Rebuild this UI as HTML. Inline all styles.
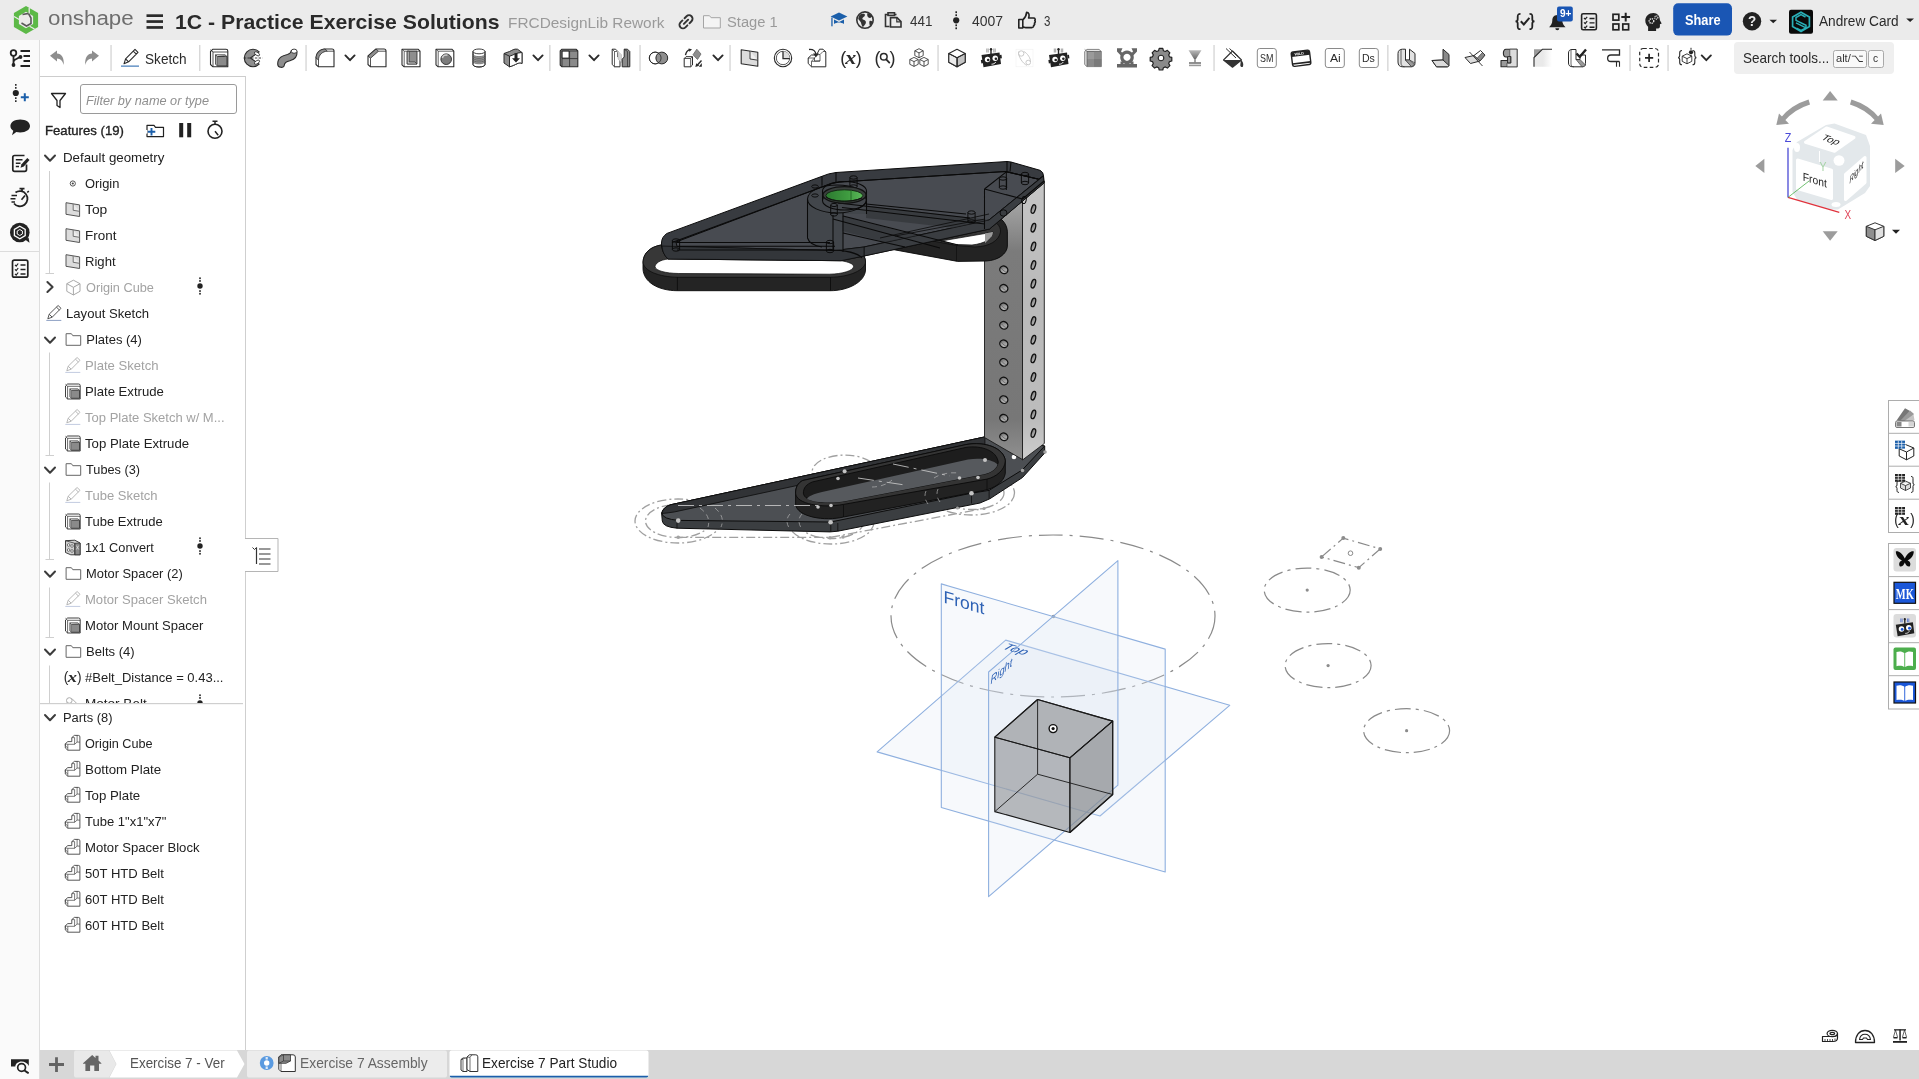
<!DOCTYPE html>
<html lang="en">
<head>
<meta charset="utf-8">
<title>1C - Practice Exercise Solutions</title>
<style>
*{box-sizing:border-box;margin:0;padding:0}
html,body{width:1919px;height:1079px;overflow:hidden;background:#fff;font-family:"Liberation Sans",sans-serif;color:#222}
.abs{position:absolute}
#topbar{position:absolute;left:0;top:0;width:1919px;height:40px;background:#ebebeb}
#leftbar{position:absolute;left:0;top:40px;width:40px;height:1039px;background:#fafafa}
#toolbar{position:absolute;left:40px;top:40px;width:1879px;height:36px;background:#fff}
#panel{position:absolute;left:40px;top:76px;width:206px;height:974px;background:#fff;overflow:hidden}
#tabs{position:absolute;left:40px;top:1050px;width:1879px;height:29px;background:#d7d7d7}
#canvas{position:absolute;left:246px;top:76px;width:1673px;height:974px;background:#fff}
.gl{position:absolute;left:0;top:0;width:100%;height:100%;will-change:transform}
.t{position:absolute;white-space:nowrap;transform-origin:0 50%;line-height:1}
svg{position:absolute;overflow:visible}
</style>
</head>
<body>
<div id="topbar">
<div class="gl"><svg width="1919" height="40" style="left:0;top:0" viewBox="0 0 1919 40">
<!-- onshape logo -->
<g transform="translate(26,20)">
<polygon points="0,-14 12.1,-7 12.1,7 0,14 -12.1,7 -12.1,-7" fill="#5cb947"/>
<polygon points="0,-8.2 7.1,-4.1 7.1,4.1 0,8.2 -7.1,4.1 -7.1,-4.1" fill="#ebebeb"/>
<path d="M-3.5,-5.5 L2.5,-6.5 L5,-2 L5,3.5 L0.5,6 L-4.5,3" fill="none" stroke="#5a5a5a" stroke-width="1.6"/>
<path d="M3.2,-12 L3.2,-6.5 M-12,-3.5 L-6.8,-0.5 M8.5,9 L3.5,6.2" stroke="#ebebeb" stroke-width="1.3"/>
</g>
<!-- hamburger -->
<rect x="146.5" y="14.3" width="16.5" height="2.7" fill="#2a2a2a"/><rect x="146.5" y="20.2" width="16.5" height="2.7" fill="#2a2a2a"/><rect x="146.5" y="26.1" width="16.5" height="2.7" fill="#2a2a2a"/>
<!-- link -->
<g fill="none" stroke="#333" stroke-width="1.900" stroke-linecap="round" transform="rotate(-45 686 21.800)">
<path d="M684.500,18.300 h-2.800 a3.500,3.500 0 0 0 0,7 h2.800"/><path d="M687.500,18.300 h2.800 a3.500,3.500 0 0 1 0,7 h-2.800"/><path d="M683,21.800 h6"/>
</g>
<!-- folder -->
<path d="M703.5,28 V15.7 h6 l1.6,2 h9.2 V28 z" fill="#f4f4f4" stroke="#a5a5a5" stroke-width="1"/>
<!-- grad cap -->
<g fill="#1b5faa"><polygon points="839,12.6 847.4,16.6 839,20.6 830.6,16.6"/><path d="M834,19.6 V24 c3,-2 7,-2 10,0 V19.6 l-5,2.4 z"/><rect x="831.3" y="17.5" width="1.3" height="8.8"/></g>
<!-- globe -->
<circle cx="865" cy="20.1" r="8.2" fill="none" stroke="#333" stroke-width="1.6"/>
<path d="M859.5,14.8 c2,-1.2 4,-1.4 5.3,-0.6 c0.5,1.6 -0.6,2.4 -1.8,3.2 c-1.2,0.8 -0.6,2 0.6,2.4 c1.6,0.6 2.8,1.6 2.2,3.4 c-0.6,1.6 -1.8,2.6 -3,4 c-1.2,-1.6 -1.4,-3.4 -2,-5 c-0.8,-1.6 -2.4,-2.2 -2.6,-4 z M867.5,13 c2,0.4 3.8,1.6 4.8,3.4 c-1.2,0.8 -2.2,2 -3.4,1.4 c-1.4,-0.8 -2.2,-2.6 -1.4,-4.8 z M869.5,21 c1.2,-0.4 2.4,0 3,1 c-0.4,1.6 -1.2,3 -2.4,4 c-0.8,-1.6 -1,-3.4 -0.6,-5 z" fill="#333"/>
<!-- copy -->
<g fill="none" stroke="#333" stroke-width="1.6"><path d="M889.5,26.5 h-4 V14.5 h3"/><rect x="888" y="12.8" width="6.5" height="2.6"/><path d="M894.5,14.5 h2"/><path d="M890.5,17.6 h6.5 l4,4 V27 h-10.5 z" fill="#ebebeb"/><path d="M896.8,17.8 v4 h4" stroke-width="1.2"/></g>
<!-- branch dots -->
<g fill="#222"><circle cx="956.2" cy="20.3" r="3.1"/><rect x="955.4" y="11.3" width="1.6" height="1.8"/><rect x="955.4" y="14.3" width="1.6" height="1.8"/><rect x="955.4" y="24.4" width="1.6" height="1.8"/><rect x="955.4" y="27.4" width="1.6" height="1.8"/></g>
<!-- thumb -->
<path d="M1018.8,19.5 h4 v8.5 h-4 z M1022.8,19.8 c2,-1.8 3.6,-4 3.8,-7.4 c2.4,0 3,2.2 2,5.6 h5 c1.6,0 2,1.6 1.2,2.6 c0.8,0.8 0.6,2 -0.4,2.6 c0.6,0.8 0.2,2 -0.8,2.4 c0.2,1.2 -0.6,2 -1.8,2 h-6 c-1.2,0 -2,-0.6 -3,-1" fill="none" stroke="#222" stroke-width="1.6" stroke-linejoin="round"/>
<!-- {check} -->
<g fill="none" stroke="#222" stroke-width="1.8"><path d="M1520.5,13.8 c-2.6,0 -2.8,1 -2.8,3 v2.4 c0,1.4 -0.8,2.2 -2.2,2.2 c1.4,0 2.2,0.8 2.2,2.2 v2.6 c0,2 0.2,3 2.8,3"/><path d="M1529.5,13.8 c2.6,0 2.8,1 2.8,3 v2.4 c0,1.4 0.8,2.2 2.2,2.2 c-1.4,0 -2.2,0.8 -2.2,2.2 v2.6 c0,2 -0.2,3 -2.8,3"/><path d="M1520.8,21.2 l3,3.2 l5.6,-6.6" stroke-width="2"/></g>
<!-- bell -->
<path d="M1557.3,15 c-3.6,0 -5,2.8 -5,5.6 c0,3 -1.4,5 -3.2,6.6 h16.4 c-1.8,-1.6 -3.2,-3.600 -3.200,-6.600 c0,-2.800 -1.400,-5.600 -5,-5.600 z M1555.300,28.200 a2,2 0 0 0 4,0 z" fill="#222"/>
<rect x="1557" y="6.500" width="15.800" height="15" rx="2" fill="#1a56b4"/>
<!-- checklist -->
<g fill="none" stroke="#222" stroke-width="1.6"><rect x="1581.600" y="13.800" width="14.800" height="16" rx="1.500"/><path d="M1584,18 l1.200,1.200 l2,-2.400 M1584,22.400 l1.200,1.200 l2,-2.400 M1584,26.800 l1.200,1.200 l2,-2.400" stroke-width="1.200"/><path d="M1589.500,18.500 h5 M1589.500,22.900 h5 M1589.500,27.300 h5" stroke-width="1.400"/></g>
<!-- apps -->
<g fill="none" stroke="#222" stroke-width="1.700"><rect x="1613" y="14.300" width="5.800" height="5.800"/><rect x="1613" y="24" width="5.800" height="5.800"/><rect x="1622.800" y="24" width="5.800" height="5.800"/><path d="M1625.700,12.700 v8.800 M1621.300,17.100 h8.800" stroke-width="2"/></g>
<!-- head gears -->
<path d="M1653.500,13 c-4.800,0 -8.200,3.400 -8.200,7.600 c0,2.800 1.200,4.600 2.800,6.200 v4.200 h8 v-2.600 h2 c1.200,0 1.800,-0.600 1.800,-1.800 v-2.400 l1.800,-0.600 l-1.800,-3.400 c0,-4.200 -2.600,-7.200 -6.400,-7.200 z" fill="#222"/>
<circle cx="1651.500" cy="21" r="2.300" fill="none" stroke="#ebebeb" stroke-width="1.300" stroke-dasharray="1.200 0.800"/><circle cx="1656.300" cy="17.500" r="1.600" fill="none" stroke="#ebebeb" stroke-width="1.100" stroke-dasharray="1 0.700"/>
<!-- share -->
<rect x="1673.200" y="3.300" width="58.800" height="32.300" rx="5" fill="#1a56b4"/>
<!-- help -->
<circle cx="1752" cy="21.300" r="9.200" fill="#222"/>
<polygon points="1769.500,19.800 1777,19.800 1773.250,23.300" fill="#222"/>
<!-- avatar -->
<rect x="1789" y="9.800" width="24" height="24" rx="2" fill="#0a0a0a"/>
<g fill="none" stroke="#2ab0b8" stroke-width="1.700"><polygon points="1801,12.300 1809.400,17.100 1809.400,26.600 1801,31.400 1792.600,26.600 1792.600,17.100"/><path d="M1805.500,17 l-4.500,-2.300 l-5,2.800 v2.800 l10,5 v2.600 l-5,2.500 l-4.500,-2.300 M1796,22.800 l10,5" stroke-width="1.500"/></g>
<polygon points="1906.200,18.600 1914,18.600 1910.100,22.100" fill="#222"/>
</svg>
<span class="t" style="left:48px;top:8.13px;font-size:20px;color:#6e6e6e;transform:scaleX(1.1166);">onshape</span>
<span class="t" style="left:175.3px;top:10.74px;font-size:21px;color:#2a2a2a;transform:scaleX(1.0110);font-weight:700;">1C - Practice Exercise Solutions</span>
<span class="t" style="left:508px;top:14.73px;font-size:15.5px;color:#9a9a9a;transform:scaleX(0.9928);">FRCDesignLib Rework</span>
<span class="t" style="left:727px;top:13.93px;font-size:15.5px;color:#9a9a9a;transform:scaleX(0.9488);">Stage 1</span>
<span class="t" style="left:909.8px;top:13.27px;font-size:15px;color:#333;transform:scaleX(0.8949);">441</span>
<span class="t" style="left:972.2px;top:13.27px;font-size:15px;color:#333;transform:scaleX(0.9318);">4007</span>
<span class="t" style="left:1043.6px;top:13.27px;font-size:15px;color:#333;transform:scaleX(0.7670);">3</span>
<span class="t" style="left:1559.5px;top:8.92px;font-size:10px;color:#fff;transform:scaleX(1.0082);font-weight:700;">9+</span>
<span class="t" style="left:1685px;top:12.17px;font-size:15.2px;color:#fff;transform:scaleX(0.8432);font-weight:700;">Share</span>
<span class="t" style="left:1748px;top:14.22px;font-size:14.5px;color:#ebebeb;transform:scaleX(0.9256);font-weight:700;">?</span>
<span class="t" style="left:1818.8px;top:14.42px;font-size:14.7px;color:#2a2a2a;transform:scaleX(0.9298);">Andrew Card</span>
</div>
</div>
<div id="toolbar">
<div class="gl"><div class="abs" style="left:1693.7px;top:2px;width:160.3px;height:31.7px;background:#efefef;border-radius:4px"></div>
<div class="abs" style="left:1793px;top:9.7px;width:33.6px;height:18px;background:#f9f9f9;border:1px solid #a9a9a9;border-radius:2.5px"></div>
<div class="abs" style="left:1827.6px;top:9.7px;width:16px;height:18px;background:#f9f9f9;border:1px solid #a9a9a9;border-radius:2.5px"></div>
<svg width="1879" height="36" style="left:0;top:0" viewBox="40 40 1879 36">
<defs>
<path id="chev" d="M-4.6,-2.6 L0,2.2 L4.6,-2.6" fill="none" stroke="#2a2a2a" stroke-width="1.9" stroke-linecap="round" stroke-linejoin="round"/>
<rect id="sep" x="-0.6" y="45" width="1.3" height="26" fill="#d4d4d4"/>
</defs>
<use href="#sep" x="111"/><use href="#sep" x="199.7"/><use href="#sep" x="306"/><use href="#sep" x="549.8"/><use href="#sep" x="640"/><use href="#sep" x="730"/><use href="#sep" x="938"/><use href="#sep" x="1214"/><use href="#sep" x="1387.8"/><use href="#sep" x="1630"/><use href="#sep" x="1668"/>
<use href="#chev" x="350" y="58"/><use href="#chev" x="538" y="58"/><use href="#chev" x="594" y="58"/><use href="#chev" x="718" y="58"/><use href="#chev" x="1706.3" y="58"/>
<!--A0--><g fill="#8e8e8e"><path d="M50,55.8 L57,50.6 V53.6 C61.5,53.8 64.2,57.5 63.8,65 C62.5,60.5 60.5,58.6 57,58.4 V61.4 Z"/><path d="M99,55.8 L92,50.6 V53.6 C87.5,53.8 84.800,57.500 85.200,65 C86.500,60.500 88.500,58.600 92,58.400 V61.400 Z"/></g>
<!-- pencil -->
<g fill="none" stroke="#2a2a2a" stroke-width="1.1" stroke-linejoin="round"><path d="M124,63.800 L125.600,58.800 L135,49.400 L138,52.400 L128.600,61.800 Z M125.600,58.800 L128.600,61.800 M133.300,51.100 L136.300,54.100"/></g>
<rect x="121" y="65.600" width="18" height="1" fill="#1b5faa"/>
<!-- extrude 219 -->
<g transform="translate(219,58)" stroke="#2a2a2a" stroke-width="1.100" stroke-linejoin="round"><path d="M-8.500,-6.500 L-6,-8.800 H7 Q8.800,-8.800 8.800,-7 V8.800 H-6 L-8.500,6.500 Z" fill="#fff"/><path d="M-6,-6 H8.800 M-6,-6 V8.800 M-6,-6 L-8.500,-8.300" fill="none" stroke-width="0.800"/><rect x="-1.500" y="-1.500" width="9.500" height="9.500" fill="#8a8a8a" stroke-width="0.900"/><path d="M-1.500,-1.500 L-3.500,-3.200 V6.300 L-1.500,8 M-3.500,-3.200 H6 L8,-1.500" fill="#a5a5a5" stroke-width="0.700"/></g>
<!-- revolve 253 -->
<g transform="translate(253,58)"><path d="M6.200,-6.100 A8.700,8.700 0 1 0 6.200,6.100 L-2.600,0 Z" fill="#8e8e8e" stroke="#2a2a2a" stroke-width="1.100" stroke-linejoin="round"/><ellipse cx="4" cy="-4.200" rx="2.900" ry="1.500" transform="rotate(35 4 -4.200)" fill="#fff" stroke="#2a2a2a" stroke-width="0.800"/><ellipse cx="4" cy="4.200" rx="2.900" ry="1.500" transform="rotate(-35 4 4.200)" fill="#fff" stroke="#2a2a2a" stroke-width="0.800"/><path d="M-9.200,0 H9.500" stroke="#2a2a2a" stroke-width="0.900" stroke-dasharray="2.400 1.300" fill="none"/></g>
<!-- sweep 287 -->
<g transform="translate(287,58)"><path d="M-9.300,6 C-9.300,-1.500 -3,-2.500 0.500,-3.500 C3,-4.300 4,-5.500 4.200,-7 L10,-6 C10.300,-0.500 7,1.500 3.500,2.500 C0,3.500 -2.500,4 -2.800,7.500 C-3.200,10.300 -9.300,10 -9.300,6 Z" fill="#8e8e8e" stroke="#2a2a2a" stroke-width="1.100"/><ellipse cx="7.100" cy="-6.800" rx="2.900" ry="2.100" fill="#fff" stroke="#2a2a2a" stroke-width="0.900"/></g>
<!-- fillet 325 -->
<g transform="translate(325,58)" stroke="#2a2a2a" stroke-width="1.100" stroke-linejoin="round"><path d="M-9,0 C-9,-5 -5,-9 0,-9 H7 Q9,-9 9,-7 V8.800 H-6.500 L-9,6.500 Z" fill="#fff"/><path d="M-9,0 C-9,-5 -5,-9 0,-9 L2.500,-6.800 C-2.500,-6.800 -6.500,-3 -6.500,2 Z" fill="#8e8e8e" stroke-width="0.800"/><path d="M-6.500,2 V8.800 M2.500,-6.800 H9" fill="none" stroke-width="0.800"/></g>
<!-- chamfer 377 -->
<g transform="translate(377,58)" stroke="#2a2a2a" stroke-width="1.100" stroke-linejoin="round"><path d="M-9,-2 L-1,-9 H7 Q9,-9 9,-7 V8.800 H-6.500 L-9,6.500 Z" fill="#fff"/><path d="M-9,-2 L-1,-9 L1.500,-6.800 L-6.500,0.200 Z" fill="#8e8e8e" stroke-width="0.800"/><path d="M-6.500,0.200 V8.800 M1.500,-6.800 H9" fill="none" stroke-width="0.800"/></g>
<!-- draft/shell 411 -->
<g transform="translate(411,58)" stroke="#2a2a2a" stroke-width="1.100" stroke-linejoin="round"><path d="M-9,-8.800 H7 L9,-6.800 V8.800 H-6.800 L-9,6.800 Z" fill="#fff"/><path d="M-6.800,-6.800 V8.800 M-6.800,-6.800 H9 M-6.800,-6.800 L-9,-8.800" fill="none" stroke-width="0.700"/><path d="M-3.800,-6.800 H6 V6 H-3.800 Z" fill="#8e8e8e" stroke-width="0.800"/><path d="M-3.800,-6.800 V6 H6 L4,4 H-1.800 V-6.800 Z" fill="#c9c9c9" stroke-width="0.700"/></g>
<!-- hole 445 -->
<g transform="translate(445,58)" stroke="#2a2a2a" stroke-width="1.100" stroke-linejoin="round"><path d="M-9,-8.800 H6.800 L8.800,-6.800 V8.800 H-6.800 L-9,6.800 Z" fill="#fff"/><path d="M-6.800,-6.800 V8.800 M-6.800,-6.800 H8.800 M-6.800,-6.800 L-9,-8.800" fill="none" stroke-width="0.700"/><circle cx="1.200" cy="1.200" r="5.300" fill="#7d7d7d" stroke-width="0.900"/><path d="M-2.600,0 A3.800,3.800 0 0 1 2.500,-2.800" fill="none" stroke="#cfcfcf" stroke-width="1.500"/></g>
<!-- thread 479 -->
<g transform="translate(479,58)" stroke="#2a2a2a" stroke-width="0.900"><path d="M-6,-6.600 V6.600 A6,2.400 0 0 0 6,6.600 V-6.600" fill="#fff"/><path d="M-6,-3.600 A6,2.400 0 0 0 6,-3.600 V3.200 A6,2.400 0 0 1 -6,3.200 Z" fill="#9a9a9a" stroke="none"/><path d="M-6,-3.800 A6,2.400 0 0 0 6,-3.800 M-6,-2 A6,2.400 0 0 0 6,-2 M-6,-0.200 A6,2.400 0 0 0 6,-0.200 M-6,1.600 A6,2.400 0 0 0 6,1.600 M-6,3.400 A6,2.400 0 0 0 6,3.400" fill="none" stroke="#555" stroke-width="0.700"/><ellipse cx="0" cy="-6.600" rx="6" ry="2.400" fill="#fff"/><path d="M-6,-6.600 V6.600 A6,2.400 0 0 0 6,6.600 V-6.600" fill="none"/></g>
<!-- move face 513 -->
<g transform="translate(513,58)" stroke="#2a2a2a" stroke-width="1" stroke-linejoin="round"><path d="M-9,-4.500 L-3.500,-6.500 C-1,-7.500 1,-9.500 4.500,-8.800 L9,-5.500 V5.500 C6,3.500 3,7 -3.500,8.800 L-9,5 Z" fill="#8e8e8e"/><path d="M-3.500,-1.800 C0,-2.500 3,-5.500 9,-5.500 V5.500 C6,3.500 3,7 -3.500,8.800 Z" fill="#fff"/><path d="M-9,-4.500 L-3.500,-1.800 V8.800" fill="none"/><path d="M1.500,-4.800 H4.500 V0.200 H7 L3,4.500 L-1,0.200 H1.500 Z" fill="#222" stroke="none"/></g>
<!-- pattern 569 -->
<g transform="translate(569,58)" stroke="#2a2a2a" stroke-width="1.100" stroke-linejoin="round"><path d="M-8.800,-7 L-7,-8.800 H7 L8.800,-7 V8.800 H-7 L-8.800,7 Z" fill="#8a8a8a"/><rect x="-7" y="-7" width="7" height="7" fill="#fff" stroke-width="0.800"/><path d="M0.600,-7 V8.800 M-7,0.600 H8.800 M-7,-7 V8.800 M-7,-7 H8.800" fill="none" stroke-width="0.800"/></g>
<!-- mirror 621 -->
<g transform="translate(621,58)" stroke="#2a2a2a" stroke-width="1" stroke-linejoin="round"><path d="M-8.800,-8.800 H-5.500 L-3.200,-6.500 V-1 L-1,1.200 V8.800 H-6.500 L-8.800,6.500 Z" fill="#fff"/><path d="M-6.500,-6.500 V8.800 M-8.800,-8.800 L-6.500,-6.500 H-3.200" fill="none" stroke-width="0.700"/><path d="M-4.500,-8.300 L0.500,-3.300 V4.500 L-3,1 V-5 Z" fill="#d5d5d5" stroke="#aaa" stroke-width="0.500"/><path d="M3.200,-8.800 H6.500 L8.800,-6.500 V8.800 H1.200 V1.200 L3.200,-1 Z" fill="#8a8a8a"/><path d="M6.500,-6.500 V8.800 M6.500,-6.500 L3.200,-8.800" fill="none" stroke-width="0.700"/></g>
<!--A1-->
<!--B0--><!-- boolean 658.5 -->
<g transform="translate(658.5,58)" stroke="#2a2a2a" stroke-width="1"><circle cx="-3.300" cy="0" r="5.900" fill="#fff"/><circle cx="3.300" cy="0" r="5.900" fill="#8e8e8e"/><circle cx="-3.300" cy="0" r="5.900" fill="none" stroke-width="0.800"/></g>
<!-- transform 693 -->
<g transform="translate(693,58)" stroke="#2a2a2a" stroke-width="1" stroke-linejoin="round"><path d="M-8.800,0.500 L-7,-1.300 H-0.500 V7 L-2.300,8.800 H-8.800 Z" fill="#fff"/><path d="M-8.800,0.500 H-2.300 V8.800 M-2.300,0.500 L-0.500,-1.300" fill="none" stroke-width="0.800"/><polygon points="3.800,-8.800 8,-4 4.500,1.500 0,-3.200" fill="#8e8e8e" stroke="#666" stroke-width="0.800"/><path d="M-7.500,-2.800 C-7,-5.500 -5.500,-7.500 -3.500,-8.300" fill="none" stroke-width="1.400"/><polygon points="-4.500,-9.500 -1,-8.800 -3.500,-6.200" fill="#2a2a2a" stroke="none"/><path d="M8.500,2.500 L4,7.500" fill="none" stroke-width="1.400"/><polygon points="2.300,9 3.300,5.300 6.200,7.800" fill="#2a2a2a" stroke="none"/><polygon points="8.800,5 8.800,8.800 5.800,8.800" fill="#2a2a2a" stroke="none"/></g>
<!-- plane 749.5 -->
<g transform="translate(749.500,58)" stroke="#2a2a2a" stroke-width="1.100" stroke-linejoin="round"><path d="M-8.300,-8.300 L8.300,-5.800 V8.300 L-8.300,5.800 Z" fill="#dcdcdc"/><path d="M0.500,-7 V1 L8.300,2.200" fill="#efefef" stroke-width="0.900"/></g>
<!-- clock 783 -->
<g transform="translate(783,58)" stroke="#2a2a2a" fill="none"><circle r="8.700" stroke-width="1.100" fill="#fff"/><circle r="6.700" stroke-width="0.800"/><path d="M0,-6.700 A6.700,6.700 0 0 1 6.700,0 H0 Z" fill="#dcdcdc" stroke="none"/><path d="M0,-6.700 V0.600 H6.700" stroke-width="1.300"/></g>
<!-- derived 817 -->
<g transform="translate(817,58)" stroke="#2a2a2a" stroke-width="1" stroke-linejoin="round"><path d="M-8.800,0 L-5.500,-3 H-0.500 L2.500,-8.800 H6 L8.800,-6 V8.800 H-5.500 L-8.800,5.500 Z" fill="#fff"/><path d="M-8.800,0 H-2.500 L-5.500,3.300 V8.800 M-2.500,0 L-0.500,-3 M-2.500,0 V3 H3 V-3.500 L6,-6.500 H8.800 M3,-3.500 L-0.200,-3.200 M-5.500,3.300 H-2 L3,3" fill="none" stroke-width="0.700"/><path d="M-8,-8.500 C-4,-8.800 -1.500,-7 -1,-3.500" fill="none" stroke-width="1.300"/><polygon points="-4,-4.500 2,-4.500 -1,-0.800" fill="#2a2a2a" stroke="none"/></g>
<!-- cubes 919 -->
<g transform="translate(919,58)" stroke="#2a2a2a" stroke-width="0.800" fill="#fff" stroke-linejoin="round"><g id="cb"><polygon points="0,-9.300 4.200,-7.200 4.200,-2.400 0,-0.300 -4.200,-2.400 -4.200,-7.200"/><path d="M-4.200,-7.200 L0,-5.100 L4.200,-7.200 M0,-5.100 V-0.300" fill="none"/></g><use href="#cb" x="-5" y="8.700"/><use href="#cb" x="5" y="8.700"/></g>
<!-- cube 957 -->
<g transform="translate(957,58)" stroke="#2a2a2a" stroke-width="1.100" stroke-linejoin="round"><polygon points="0,-8.800 8.200,-4.500 8.200,4.300 0,8.800 -8.200,4.300 -8.200,-4.500" fill="#fff"/><polygon points="0,-0.200 8.200,-4.500 8.200,4.300 0,8.800" fill="#c4c4c4"/><polygon points="0,-0.200 -8.200,-4.500 -8.200,4.300 0,8.800" fill="#ececec"/><path d="M-8.200,-4.500 L0,-0.200 L8.200,-4.500 M0,-0.200 V8.800" fill="none" stroke-width="0.900"/></g>
<!-- robots 991 / 1058.5 -->
<g id="robot" transform="translate(991,58)"><path d="M-9.500,-3 L8.500,-5.500 L10,6 L-7.500,9.300 Z" fill="#222"/><rect x="-10.300" y="0.500" width="2" height="3.500" fill="#222" transform="rotate(-8)"/><rect x="9" y="-1.800" width="1.800" height="3.500" fill="#222" transform="rotate(-8)"/><circle cx="-3.500" cy="1.500" r="2.700" fill="#fff"/><circle cx="4.200" cy="0.300" r="2.700" fill="#fff"/><circle cx="-2.800" cy="2" r="1.300" fill="#222"/><circle cx="4.900" cy="0.800" r="1.300" fill="#222"/><path d="M0.500,6.200 C2.500,6.300 4,5.300 4.800,4" stroke="#fff" stroke-width="0.900" fill="none"/><rect x="-0.700" y="-8.500" width="1.400" height="4.500" fill="#222"/><circle cx="0" cy="-8.800" r="1.200" fill="#222"/><path d="M-4.200,-9.500 v4 M-2.800,-9.500 v4 M2.800,-9.500 v4 M4.200,-9.500 v4" stroke="#777" stroke-width="0.700"/></g>
<use href="#robot" x="67.500"/>
<!-- faded link 1024.5 -->
<g transform="translate(1024.500,58)" fill="none" stroke="#c9c9c9" stroke-width="1"><rect x="-8.500" y="-8.800" width="17" height="17.600" stroke="#f0f0f0" stroke-width="0.600"/><circle cx="-3.300" cy="-4.500" r="2.700"/><circle cx="3.700" cy="4.500" r="2.300"/><path d="M-5.800,-6.500 C-7,-2 -1,6.500 2.500,7.300 M-0.800,-6.500 C3,-5 6.500,1 6,4"/></g>
<!-- color cube 1093 -->
<g transform="translate(1093,58)" stroke="#555" stroke-width="0.700" stroke-linejoin="round"><path d="M-8.300,-6.500 L-6,-8.600 H6 L8.300,-6.500 V8.600 H-6 L-8.300,6.500 Z" fill="#e4e4e4"/><rect x="-6" y="-6.500" width="14.300" height="15.100" fill="#8a8a8a" stroke="none"/><rect x="-6" y="-6.500" width="7" height="7.500" fill="#9a9a9a" stroke="none"/><rect x="1" y="1" width="7.300" height="7.600" fill="#7a7a7a" stroke="none"/><path d="M-6,-6.500 H8.300 M-6,-6.500 V8.600 M-6,-6.500 L-8.300,-8.600" fill="none"/></g>
<!-- frame 1127 -->
<g transform="translate(1127,58)" fill="#666" stroke="none"><rect x="-10" y="6" width="20" height="3.500"/><path d="M0,-7.500 A6.800,6.800 0 1 0 0.010,-7.500 Z M0,-4.300 A3.600,3.600 0 1 1 -0.010,-4.300 Z" fill-rule="evenodd"/><polygon points="-10,-9.800 -4.500,-9.800 -6,-6.500 -3.800,-4.300 -6,-2.200 -10,-6.500"/><polygon points="10,-9.800 4.500,-9.800 6,-6.500 3.800,-4.300 6,-2.200 10,-6.500"/><rect x="-6.500" y="3.500" width="3" height="3"/><rect x="3.500" y="3.500" width="3" height="3"/></g>
<!-- gear 1161 -->
<g transform="translate(1161,58)"><path d="M-1.800,-9.600 h3.600 l0.600,2.300 l1.900,0.800 l2.100,-1.200 l2.500,2.500 l-1.200,2.100 l0.800,1.900 l2.300,0.600 v3.600 l-2.300,0.600 l-0.800,1.900 l1.200,2.100 l-2.500,2.500 l-2.100,-1.200 l-1.900,0.800 l-0.600,2.300 h-3.600 l-0.600,-2.300 l-1.900,-0.800 l-2.100,1.200 l-2.500,-2.500 l1.200,-2.100 l-0.800,-1.900 l-2.300,-0.600 v-3.600 l2.300,-0.600 l0.800,-1.900 l-1.200,-2.100 l2.500,-2.500 l2.100,1.200 l1.900,-0.800 z" fill="#8a8a8a" stroke="#222" stroke-width="1.200" stroke-linejoin="round"/><circle r="2.800" fill="#fff" stroke="#222" stroke-width="1.100"/></g>
<!-- laser 1195 -->
<g transform="translate(1195,58)"><defs><linearGradient id="lg1" x1="0" y1="0" x2="0" y2="1"><stop offset="0" stop-color="#bbb"/><stop offset="1" stop-color="#666"/></linearGradient></defs><polygon points="-6.500,-7.800 6.500,-7.800 0.700,1.500 -0.700,1.500" fill="url(#lg1)"/><rect x="-0.600" y="1.500" width="1.200" height="3" fill="#666"/><rect x="-6" y="4.200" width="12" height="1.600" fill="#777"/><rect x="-6" y="6.600" width="12" height="1.600" fill="#999"/></g>
<!--B1-->
<!--C0--><!-- (x) 851 -->
<g font-family="'Liberation Sans',sans-serif" fill="#2a2a2a"><text x="840.300" y="64" font-size="19" textLength="6" lengthAdjust="spacingAndGlyphs">(</text><text x="855.700" y="64" font-size="19" textLength="6" lengthAdjust="spacingAndGlyphs">)</text><text x="845.300" y="63.500" font-size="19" font-family="'Liberation Serif',serif" font-style="italic" font-weight="700" textLength="11" lengthAdjust="spacingAndGlyphs">x</text>
<text x="874.500" y="64" font-size="19" textLength="6" lengthAdjust="spacingAndGlyphs">(</text><text x="889.500" y="64" font-size="19" textLength="6" lengthAdjust="spacingAndGlyphs">)</text></g>
<circle cx="883.800" cy="56.800" r="3.300" fill="none" stroke="#2a2a2a" stroke-width="1.500"/><path d="M886.200,59.300 L889.300,62.600" stroke="#2a2a2a" stroke-width="1.800" stroke-linecap="round"/>
<!-- paint 1233 -->
<g transform="translate(1233,58)"><path d="M-9.500,2 L-0.500,-7 L8.500,2 L-0.500,9.300 Z" fill="#fff" stroke="#333" stroke-width="1.100" stroke-linejoin="round"/><path d="M-9.500,2 H8.500 L-0.500,9.300 Z" fill="#333"/><path d="M-7,-9.500 L3,0 M-3.500,-9.500 L5,-1.500" stroke="#333" stroke-width="1" fill="none"/><path d="M7.500,2 C10,3 10.800,6 10,8.500 C9,9.500 7.500,9 7.300,7.500 C7.300,5.500 8,4 7.500,2 Z" fill="#333"/></g>
<!-- boxes SM Ai Ds -->
<g fill="#fff" stroke="#8a8a8a" stroke-width="1"><rect x="1257.300" y="48.500" width="19" height="19" rx="2.500"/><rect x="1325.300" y="48.500" width="19" height="19" rx="2.500"/><rect x="1359.300" y="48.500" width="19" height="19" rx="2.500"/></g>
<!-- wild 1301 -->
<g transform="translate(1301,58) rotate(-7)"><rect x="-9.200" y="-7" width="18.400" height="14.500" rx="2" fill="#fff" stroke="#222" stroke-width="1.400"/><path d="M-9.200,-5 a2,2 0 0 1 2,-2 h14.400 a2,2 0 0 1 2,2 v2.800 h-18.400 z" fill="#222"/><path d="M-9,5 h18" stroke="#222" stroke-width="1.600"/><text x="-6" y="-3.200" font-size="3.600" font-weight="700" fill="#fff" font-family="'Liberation Sans',sans-serif">WILD</text></g>
<!-- SM model 1406.5 -->
<g transform="translate(1406.500,58)" stroke="#2a2a2a" stroke-width="1" stroke-linejoin="round"><path d="M-8.500,-4.500 C-8.500,-7.500 -6.500,-8.800 -4,-8.800 H-1 V2 H3 V-8.800 L8.500,-4.500 V5 C8.500,7.500 7,8.800 4.500,8.800 H-4 C-7,8.800 -8.500,7 -8.500,4 Z" fill="#e2e2e2"/><path d="M-1,2 L5,8.500 M3,2 L8.500,5 " fill="none" stroke-width="0.700"/><path d="M-1,2 H3 L8,6.500 L5,8.800 Z" fill="#9a9a9a" stroke-width="0.600"/><path d="M-5.500,-8.600 V5 C-5.500,7 -4.500,8.800 -2,8.800" fill="none" stroke-width="0.700"/></g>
<!-- flange 1440.5 -->
<g transform="translate(1440.500,58)" stroke="#2a2a2a" stroke-width="1" stroke-linejoin="round"><path d="M-8.500,2.500 L2.500,2 V-8.800 L8.500,-3.500 V7 C8.500,8.300 7.500,8.800 6.500,8.800 H-4 Z" fill="#8a8a8a"/><path d="M-8.500,2.500 L2.500,2 L8.500,7.500 C8,8.500 7.300,8.800 6.500,8.800 H-4 Z" fill="#dcdcdc"/></g>
<!-- unfold 1475 -->
<g transform="translate(1475,58)" stroke="#2a2a2a" stroke-width="1" stroke-linejoin="round"><path d="M-10,-0.500 L-1,-2.500 L5,3 L-4.500,5.500 Z" fill="#dcdcdc"/><path d="M-1,-2.500 L5.500,-7.500 L10,-3 L5,3 Z" fill="#fff"/><path d="M2,0.300 L7.500,-5.500 L10,-3 L5,3 Z" fill="#8a8a8a" stroke-width="0.600"/><path d="M-5.500,-6 L7.500,8" fill="none" stroke-width="0.900"/></g>
<!-- tab 1509 -->
<g transform="translate(1509,58)" stroke="#2a2a2a" stroke-width="1.100" stroke-linejoin="round"><path d="M-3,-8.800 H8 V8.800 H-8 V2.500 H-1.500 V-1 H-3 C-6.500,-1 -6.500,-8.800 -3,-8.800 Z" fill="#9a9a9a"/><path d="M0.800,-8.800 H8 V8.800 H-2 V5 H1.800 V-1.500 H0.800 Z" fill="#dcdcdc" stroke-width="0.600"/><path d="M-8,2.500 H-1.500 V5 H1.800 V-1.500 H-1.500" fill="none" stroke-width="0.900"/></g>
<!-- corner 1543 -->
<g transform="translate(1543,58)"><defs><linearGradient id="lg2" x1="0" y1="0" x2="1" y2="0"><stop offset="0.500" stop-color="#e9e9e9"/><stop offset="1" stop-color="#fff"/></linearGradient></defs><path d="M-9,-0.500 L-0.500,-8.800 H9 V8.800 H-9 Z" fill="url(#lg2)"/><polygon points="-9,-8.800 -0.500,-8.800 -9,-0.500" fill="#9a9a9a"/><path d="M-9,8.800 V-0.500 L-0.500,-8.800 H9" fill="none" stroke="#2a2a2a" stroke-width="1.100"/></g>
<!-- finish 1577 -->
<g transform="translate(1577,58)" stroke="#2a2a2a" stroke-width="1" stroke-linejoin="round"><path d="M-8.500,-5 C-8.500,-7.500 -7,-8.500 -5,-8.500 H-1 V1.500 H3 V-3 L8.500,-3 V5.500 C8.500,7.800 7,8.800 5,8.800 H-4 C-7,8.800 -8.500,7.500 -8.500,5 Z" fill="#fff"/><path d="M-1,1.500 H3 L8.500,7 C8,8.300 6.500,8.800 5,8.800 Z" fill="#9a9a9a" stroke-width="0.600"/><path d="M-6,-8.300 V6 C-6,7.800 -5,8.800 -3,8.800" fill="none" stroke-width="0.700"/><path d="M-0.500,-4.500 L2.800,-1.200 L9,-8.500" fill="none" stroke="#222" stroke-width="2.400"/></g>
<!-- bend relief 1611 -->
<g fill="none" stroke="#2a2a2a" stroke-width="1.300"><path d="M1602,49.800 H1619.500 V55 H1611 C1606.500,55 1606.500,61.500 1611,61.500 H1619.500"/><path d="M1616.500,61.500 V66.800 M1619.500,61.500 V66.800" stroke-width="1.100"/></g>
<!-- [+] 1649 -->
<rect x="1639.700" y="48.500" width="18.800" height="18.800" rx="3.500" fill="none" stroke="#2a2a2a" stroke-width="1.200" stroke-dasharray="3.600 2.400"/><path d="M1649.100,53.800 v8.200 M1645,57.900 h8.200" stroke="#222" stroke-width="1.700"/>
<!-- {cube} 1687 -->
<g fill="none" stroke="#2a2a2a" stroke-width="1.100"><path d="M1682,50.500 c-2,0 -2.300,0.800 -2.300,2.300 v2.800 c0,1.200 -0.500,1.800 -1.500,2 c1,0.200 1.500,0.800 1.500,2 v2.800 c0,1.500 0.300,2.300 2.300,2.300"/><path d="M1692.500,50.500 c2,0 2.300,0.800 2.300,2.300 v2.800 c0,1.200 0.500,1.800 1.500,2 c-1,0.200 -1.500,0.800 -1.500,2 v2.800 c0,1.500 -0.300,2.300 -2.300,2.300"/><polygon points="1687,53.800 1691.800,56.200 1691.800,61.300 1687,63.800 1682.200,61.300 1682.200,56.200" stroke-width="0.900"/><path d="M1682.200,56.200 L1687,58.600 L1691.800,56.200 M1687,58.600 V63.800" stroke-width="0.900"/></g><circle cx="1691" cy="52.300" r="2.100" fill="#222"/><path d="M1691,47.800 v2 M1691,55 v1.500" stroke="#222" stroke-width="1"/>
<!--C1-->
</svg>
<span class="t" style="left:104.7px;top:11.07px;font-size:15px;color:#2a2a2a;transform:scaleX(0.9071);">Sketch</span>
<span class="t" style="left:1702.6px;top:11.27px;font-size:14.8px;color:#2a2a2a;transform:scaleX(0.9113);">Search tools...</span>
<span class="t" style="left:1796px;top:13.43px;font-size:11px;color:#333;transform:scaleX(1.0041);">alt/&#8997;</span>
<span class="t" style="left:1832.9px;top:13.43px;font-size:11px;color:#333;transform:scaleX(0.9273);">c</span>
<span class="t" style="left:1220.3px;top:12.87px;font-size:10.5px;color:#2a2a2a;transform:scaleX(0.8508);">SM</span>
<span class="t" style="left:1289.6px;top:12.87px;font-size:10.5px;color:#2a2a2a;transform:scaleX(1.1559);">Ai</span>
<span class="t" style="left:1322.3px;top:12.87px;font-size:10.5px;color:#2a2a2a;transform:scaleX(1.0044);">Ds</span>
</div>
</div>
<div id="leftbar">
<div class="gl"><div class="abs" style="left:39px;top:0;width:1px;height:1039px;background:#dedede"></div>
<div class="abs" style="left:0;top:211px;width:39px;height:1px;background:#dcdcdc"></div>
<svg width="40" height="1039" style="left:0;top:0" viewBox="0 40 40 1039">
<!-- tree -->
<g fill="none" stroke="#222" stroke-width="1.800"><circle cx="13.500" cy="53" r="2.800"/><path d="M13.500,56 V64.500 M13.500,62 C13.500,59 17,59.500 19.500,57.200"/><path d="M20.500,51 H30 M23.500,56 H30 M23.500,61 H30 M20.500,66 H30" stroke-width="2"/></g><circle cx="13.500" cy="65" r="1.900" fill="#222"/><circle cx="20.500" cy="57" r="1.900" fill="#222"/>
<!-- dot plus -->
<circle cx="15.800" cy="93" r="3.100" fill="#222"/><path d="M15.800,84 v1.800 M15.800,87 v1.800 M15.800,97.300 v1.800 M15.800,100.300 v1.800" stroke="#222" stroke-width="1.500"/><path d="M24.800,93.300 v8 M20.800,97.300 h8" stroke="#1b5faa" stroke-width="2"/>
<!-- bubble -->
<path d="M20.200,119.500 C26,119.500 30,122.300 30,126 C30,129.700 26,132.400 20.200,132.400 C18.800,132.400 17.500,132.200 16.300,131.900 L12,135.200 L13.300,130.800 C11.500,129.600 10.400,127.900 10.400,126 C10.400,122.300 14.500,119.500 20.200,119.500 Z" fill="#222"/>
<!-- note -->
<g fill="none" stroke="#222" stroke-width="1.700"><path d="M26.500,164.500 V169.500 Q26.500,171.300 24.700,171.300 H14.600 Q12.800,171.300 12.800,169.500 V157.300 Q12.800,155.500 14.600,155.500 H24.500"/><path d="M15.800,159.800 H22.500 M15.800,163.200 H20.500 M15.800,166.600 H19" stroke-width="1.500"/></g><path d="M20.500,167.800 L21.500,164.300 L27.300,158 L29.500,160 L23.800,166.500 Z" fill="#222"/>
<!-- stopwatch -->
<g fill="none" stroke="#222" stroke-width="1.800"><path d="M15.500,192.500 A7.600,7.600 0 1 1 14,203.500"/><path d="M19.500,188.700 H24.500 M22,189 V191 M27.300,192.500 L28.800,191" stroke-width="1.700"/><path d="M11.500,195.500 H17 M10.500,198.800 H15.500 M11.500,202 H15" stroke-width="1.400"/><path d="M21.500,199.800 L25,195.500" stroke-width="1.600"/></g>
<!-- circle logo -->
<circle cx="19.800" cy="232.500" r="9.800" fill="#222"/><polygon points="25,239.500 29.500,242.800 28.500,237.500" fill="#222"/><g fill="none" stroke="#fafafa" stroke-width="1.300"><polygon points="19.800,226.300 25.200,229.400 25.200,235.600 19.800,238.700 14.400,235.600 14.400,229.400"/><polygon points="19.800,229.500 22.400,231 22.400,234 19.800,235.500 17.200,234 17.200,231" stroke-width="1"/></g>
<!-- checklist -->
<g fill="none" stroke="#222" stroke-width="1.700"><rect x="12.500" y="260.200" width="15.300" height="17" rx="1.800"/><path d="M15,264.800 l1.200,1.200 l2,-2.500 M15,269.300 l1.200,1.200 l2,-2.500 M15,273.800 l1.200,1.200 l2,-2.500" stroke-width="1.200"/><path d="M20.500,265 h5 M20.500,269.500 h5 M20.500,274 h5" stroke-width="1.500"/></g>
<!-- bottom camera search -->
<path d="M11,1059.200 H28.800 V1066 C27.500,1063 24.500,1061.500 21.600,1061.500 C18,1061.500 15.300,1064 15.300,1066.600 H11 Z" fill="#222"/><circle cx="21.600" cy="1067.500" r="3.900" fill="none" stroke="#222" stroke-width="1.700"/><path d="M24.500,1070.500 L28,1072.800" stroke="#222" stroke-width="2" stroke-linecap="round"/>
</svg>
</div>
</div>
<div id="panel">
<div class="gl"><div class="abs" style="left:0;top:0;width:205px;height:1px;background:#cdcdcd"></div>
<div class="abs" style="left:205px;top:0;width:1px;height:974px;background:#cfcfcf"></div>
<div class="abs" style="left:39.5px;top:8.3px;width:157.4px;height:29.6px;border:1px solid #9a9a9a;border-radius:3px;background:#fff"></div>
<span class="t" style="left:46px;top:17.95px;font-size:13px;color:#8f8f8f;transform:scaleX(0.9784);font-style:italic;">Filter by name or type</span>
<svg width="206" height="974" style="left:0;top:0" viewBox="40 76 206 974"><defs>
<path id="cd" d="M-5,-2.800 L0,2.400 L5,-2.800" fill="none" stroke="#3c3c3c" stroke-width="2" stroke-linecap="round" stroke-linejoin="round"/>
<path id="cr" d="M-2.600,-5 L2.600,0 L-2.600,5" fill="none" stroke="#3c3c3c" stroke-width="2" stroke-linecap="round" stroke-linejoin="round"/>
<g id="origin"><circle r="2.600" fill="none" stroke="#444" stroke-width="0.900"/><circle r="1.100" fill="#444"/></g>
<g id="plane" stroke="#555" stroke-width="1" stroke-linejoin="round"><path d="M-6.800,-6.800 L6.800,-4.600 V7 L-6.800,4.800 Z" fill="#dcdcdc"/><path d="M0.400,-5.600 V0.800 L6.800,1.800" fill="#ececec" stroke-width="0.800"/></g>
<g id="cubeg" stroke="#a8a8a8" stroke-width="1" fill="none" stroke-linejoin="round"><polygon points="0,-7.300 6.600,-3.800 6.600,3.800 0,7.500 -6.600,3.800 -6.600,-3.800" fill="#fff"/><path d="M-6.600,-3.800 L0,-0.200 L6.600,-3.800 M0,-0.200 V7.500"/></g>
<g id="pencil0"><path d="M-6,5.300 L-4.600,0.700 L4.300,-8 L7.200,-5.200 L-1.600,3.700 Z M-4.600,0.700 L-1.600,3.700 M2.600,-6.400 L5.600,-3.500" fill="none" stroke="#444" stroke-width="0.900" stroke-linejoin="round"/><rect x="-7.500" y="6.400" width="15" height="1" fill="#8da0c4"/></g>
<g id="pencilg"><path d="M-6,5.300 L-4.600,0.700 L4.300,-8 L7.200,-5.200 L-1.600,3.700 Z M-4.600,0.700 L-1.600,3.700 M2.600,-6.400 L5.600,-3.500" fill="none" stroke="#b0b0b0" stroke-width="0.900" stroke-linejoin="round"/><rect x="-7.500" y="6.400" width="15" height="1" fill="#c3cbe0"/></g>
<g id="folder"><path d="M-7.300,5.800 V-5.800 H-2 L-0.600,-3.800 H7.300 V5.800 Z" fill="#fff" stroke="#666" stroke-width="1" stroke-linejoin="round"/></g>
<g id="extr" stroke="#2a2a2a" stroke-width="0.900" stroke-linejoin="round"><path d="M-7.300,-5.500 L-5.200,-7.500 H5.800 Q7.400,-7.500 7.400,-5.900 V7.500 H-5.200 L-7.300,5.500 Z" fill="#fff"/><path d="M-5.200,-5.200 H7.400 M-5.200,-5.200 V7.500 M-5.200,-5.200 L-7.300,-7.200" fill="none" stroke-width="0.700"/><rect x="-1.300" y="-1.200" width="8" height="8" fill="#8a8a8a" stroke-width="0.800"/><path d="M-1.300,-1.200 L-3,-2.700 V5.300 L-1.300,6.800 M-3,-2.700 H5 L6.700,-1.200" fill="#a8a8a8" stroke-width="0.600"/></g>
<g id="conv" stroke="#2a2a2a" stroke-width="0.900" stroke-linejoin="round"><path d="M-7.300,-6.800 L2,-7.300 L7.300,-4.500 V7.300 L-2,7.300 L-7.300,5 Z" fill="#d0d0d0"/><path d="M2,-4.200 L7.300,-4.500 V7.300 L2,7.300 Z" fill="#8a8a8a" stroke-width="0.700"/><path d="M-7.300,-6.800 L2,-4.200 V7.300" fill="none" stroke-width="0.700"/><circle cx="-4.200" cy="-2.500" r="1.300" fill="#fff" stroke-width="0.600"/><circle cx="-0.800" cy="-1.500" r="1.300" fill="#fff" stroke-width="0.600"/><circle cx="-4.200" cy="2.500" r="1.300" fill="#fff" stroke-width="0.600"/><circle cx="-0.800" cy="3.500" r="1.300" fill="#fff" stroke-width="0.600"/><path d="M3.500,-2 L6,2 M3.500,2 L6,-2" stroke="#ddd" stroke-width="0.800"/></g>
<g id="var" fill="#2a2a2a" font-family="'Liberation Sans',sans-serif"><text x="-8.800" y="4.800" font-size="15" textLength="4.600" lengthAdjust="spacingAndGlyphs">(</text><text x="4.400" y="4.800" font-size="15" textLength="4.600" lengthAdjust="spacingAndGlyphs">)</text><text x="-4.800" y="4.400" font-size="15" font-family="'Liberation Serif',serif" font-style="italic" font-weight="700" textLength="9.200" lengthAdjust="spacingAndGlyphs">x</text></g>
<g id="belt" fill="none" stroke="#aaa" stroke-width="1"><circle cx="-3.500" cy="-3" r="2.800"/><path d="M-1,-5 L6,2 M-6,-1 L1,7"/></g>
<g id="part" stroke="#444" stroke-width="0.900" fill="#fff" stroke-linejoin="round"><path d="M-7.300,1 L-4.800,-1.200 H-0.800 V-5.200 L1.800,-7.400 H5.800 Q7.300,-7.400 7.300,-5.900 V7.400 H-4.800 L-7.300,5.200 Z"/><path d="M-7.300,1 V3 L-4.800,5.200 M-4.800,1.500 H2 V-5.200 M-0.800,-5.200 H2 M2,1.500 L4.500,-0.700 V-7.400 M-4.800,1.500 L-7.300,1 M-4.800,1.500 V7.400 M4.500,-0.700 L7.300,-0.700" fill="none" stroke-width="0.700"/></g>
<g id="dots" fill="#222"><circle r="2.700"/><rect x="-0.800" y="-8.600" width="1.600" height="1.700"/><rect x="-0.800" y="-5.900" width="1.600" height="1.700"/><rect x="-0.800" y="4.200" width="1.600" height="1.700"/><rect x="-0.800" y="6.900" width="1.600" height="1.700"/></g>
</defs>
<path d="M49.500,171 V273.5 M45.500,273.5 H54" fill="none" stroke="#cfcfcf" stroke-width="1"/>
<path d="M49.500,352.5 V455.5 M45.500,455.5 H54" fill="none" stroke="#cfcfcf" stroke-width="1"/>
<path d="M49.500,482.5 V559.5 M45.500,559.5 H54" fill="none" stroke="#cfcfcf" stroke-width="1"/>
<path d="M49.500,587.5 V637.5 M45.500,637.5 H54" fill="none" stroke="#cfcfcf" stroke-width="1"/>
<path d="M49.500,665.5 V704" fill="none" stroke="#cfcfcf" stroke-width="1"/>
<use href="#cd" x="50" y="158.3"/>
<use href="#origin" x="72.8" y="183.5"/>
<use href="#plane" x="72.8" y="209.5"/>
<use href="#plane" x="72.8" y="235.5"/>
<use href="#plane" x="72.8" y="261.5"/>
<use href="#cr" x="50" y="287.0"/>
<use href="#cubeg" x="73.4" y="287.5"/>
<use href="#pencil0" x="53.8" y="313.5"/>
<use href="#cd" x="50" y="340.3"/>
<use href="#folder" x="73.4" y="339.5"/>
<use href="#pencilg" x="72.8" y="365.5"/>
<use href="#extr" x="72.8" y="391.5"/>
<use href="#pencilg" x="72.8" y="417.5"/>
<use href="#extr" x="72.8" y="443.5"/>
<use href="#cd" x="50" y="470.3"/>
<use href="#folder" x="73.4" y="469.5"/>
<use href="#pencilg" x="72.8" y="495.5"/>
<use href="#extr" x="72.8" y="521.5"/>
<use href="#conv" x="72.8" y="547.5"/>
<use href="#cd" x="50" y="574.3"/>
<use href="#folder" x="73.4" y="573.5"/>
<use href="#pencilg" x="72.8" y="599.5"/>
<use href="#extr" x="72.8" y="625.5"/>
<use href="#cd" x="50" y="652.3"/>
<use href="#folder" x="73.4" y="651.5"/>
<use href="#var" x="72.5" y="677.5"/>
<use href="#belt" x="72.8" y="703.5"/>
<use href="#dots" x="200" y="286"/><use href="#dots" x="200" y="546"/><use href="#dots" x="200" y="703"/>
<path d="M51.500,93.500 H65.500 L60,100.500 V107.500 L57,105.500 V100.500 Z" fill="none" stroke="#222" stroke-width="1.300" stroke-linejoin="round"/>
<path d="M152,125.300 H147 V136.600 H163.500 V127.300 H155.500 L154,125.300 H152" fill="none" stroke="#222" stroke-width="1.200" stroke-linejoin="round"/><path d="M151.500,128 v7.600 M147.700,131.800 h7.600" stroke="#1b5faa" stroke-width="1.900"/><path d="M146.500,130 v3.600" stroke="#fff" stroke-width="1.600"/>
<rect x="179.200" y="123" width="4" height="14.300" fill="#222"/><rect x="187.200" y="123" width="4" height="14.300" fill="#222"/>
<circle cx="215" cy="131.300" r="7" fill="none" stroke="#222" stroke-width="1.600"/><path d="M212.500,121.300 h5 M215,121.500 v2.800 M215,131.300 L218.200,135.200" stroke="#222" stroke-width="1.500" fill="none"/></svg>
<span class="t" style="left:4.5px;top:47.95px;font-size:13px;color:#222;transform:scaleX(1.0109);-webkit-text-stroke:0.35px #222;">Features (19)</span>
<span class="t" style="left:23.2px;top:74.85px;font-size:13px;color:#222;transform:scaleX(1.0242);">Default geometry</span>
<span class="t" style="left:45.1px;top:100.85px;font-size:13px;color:#222;transform:scaleX(0.9917);">Origin</span>
<span class="t" style="left:45.1px;top:126.85px;font-size:13px;color:#222;transform:scaleX(1.0635);">Top</span>
<span class="t" style="left:45.1px;top:152.85px;font-size:13px;color:#222;transform:scaleX(1.0348);">Front</span>
<span class="t" style="left:45.1px;top:178.85px;font-size:13px;color:#222;transform:scaleX(1.0079);">Right</span>
<span class="t" style="left:46px;top:204.85px;font-size:13px;color:#a3a3a3;transform:scaleX(0.9787);">Origin Cube</span>
<span class="t" style="left:26.1px;top:230.85px;font-size:13px;color:#222;transform:scaleX(1.0086);">Layout Sketch</span>
<span class="t" style="left:46.3px;top:256.85px;font-size:13px;color:#222;">Plates (4)</span>
<span class="t" style="left:45.1px;top:282.85px;font-size:13px;color:#a3a3a3;transform:scaleX(1.0082);">Plate Sketch</span>
<span class="t" style="left:45.1px;top:308.85px;font-size:13px;color:#222;transform:scaleX(1.0109);">Plate Extrude</span>
<span class="t" style="left:45.1px;top:334.85px;font-size:13px;color:#a3a3a3;">Top Plate Sketch w/ M...</span>
<span class="t" style="left:45.1px;top:360.85px;font-size:13px;color:#222;transform:scaleX(1.0144);">Top Plate Extrude</span>
<span class="t" style="left:46.3px;top:386.85px;font-size:13px;color:#222;transform:scaleX(0.9790);">Tubes (3)</span>
<span class="t" style="left:45.1px;top:412.85px;font-size:13px;color:#a3a3a3;">Tube Sketch</span>
<span class="t" style="left:45.1px;top:438.85px;font-size:13px;color:#222;">Tube Extrude</span>
<span class="t" style="left:45.1px;top:464.85px;font-size:13px;color:#222;transform:scaleX(0.9815);">1x1 Convert</span>
<span class="t" style="left:46.3px;top:490.85px;font-size:13px;color:#222;transform:scaleX(0.9913);">Motor Spacer (2)</span>
<span class="t" style="left:45.1px;top:516.85px;font-size:13px;color:#a3a3a3;transform:scaleX(1.0042);">Motor Spacer Sketch</span>
<span class="t" style="left:45.1px;top:542.85px;font-size:13px;color:#222;transform:scaleX(1.0044);">Motor Mount Spacer</span>
<span class="t" style="left:46.3px;top:568.85px;font-size:13px;color:#222;transform:scaleX(1.0061);">Belts (4)</span>
<span class="t" style="left:45.1px;top:594.85px;font-size:13px;color:#222;">#Belt_Distance = 0.43...</span>
<span class="t" style="left:45.1px;top:620.85px;font-size:13px;color:#222;transform:scaleX(1.0414);">Motor Belt</span>
<svg width="206" height="974" style="left:0;top:0" viewBox="40 76 206 974"><rect x="40" y="703.500" width="205" height="346" fill="#fff"/><rect x="40" y="703" width="203" height="1.200" fill="#cfcfcf"/>
<use href="#cd" x="50" y="717.800"/>
<use href="#part" x="72.600" y="742.8"/>
<use href="#part" x="72.600" y="768.8"/>
<use href="#part" x="72.600" y="794.8"/>
<use href="#part" x="72.600" y="820.8"/>
<use href="#part" x="72.600" y="846.8"/>
<use href="#part" x="72.600" y="872.8"/>
<use href="#part" x="72.600" y="898.8"/>
<use href="#part" x="72.600" y="924.8"/></svg>
<span class="t" style="left:23.2px;top:634.65px;font-size:13px;color:#222;transform:scaleX(0.9931);">Parts (8)</span>
<span class="t" style="left:45.1px;top:660.75px;font-size:13px;color:#222;transform:scaleX(0.9744);">Origin Cube</span>
<span class="t" style="left:45.1px;top:686.75px;font-size:13px;color:#222;transform:scaleX(1.0237);">Bottom Plate</span>
<span class="t" style="left:45.1px;top:712.75px;font-size:13px;color:#222;transform:scaleX(1.0184);">Top Plate</span>
<span class="t" style="left:45.1px;top:738.75px;font-size:13px;color:#222;">Tube 1"x1"x7"</span>
<span class="t" style="left:45.1px;top:764.75px;font-size:13px;color:#222;transform:scaleX(1.0094);">Motor Spacer Block</span>
<span class="t" style="left:45.1px;top:790.75px;font-size:13px;color:#222;transform:scaleX(1.0049);">50T HTD Belt</span>
<span class="t" style="left:45.1px;top:816.75px;font-size:13px;color:#222;transform:scaleX(1.0049);">60T HTD Belt</span>
<span class="t" style="left:45.1px;top:842.75px;font-size:13px;color:#222;transform:scaleX(1.0049);">60T HTD Belt</span>
</div>
</div>
<div id="canvas">
<div class="gl"><svg width="1673" height="974" style="left:0;top:0" viewBox="246 76 1673 974" font-family="'Liberation Sans',sans-serif">
<!--M0--><defs>
<linearGradient id="tubeL" x1="0" y1="0" x2="0" y2="1"><stop offset="0" stop-color="#b0b0b0"/><stop offset="0.230" stop-color="#7b7b7b"/><stop offset="0.850" stop-color="#777"/><stop offset="1" stop-color="#909090"/></linearGradient><linearGradient id="holeG" x1="0" y1="0" x2="1" y2="1"><stop offset="0" stop-color="#555"/><stop offset="0.450" stop-color="#9a9a9a"/><stop offset="1" stop-color="#c8c8c8"/></linearGradient>
<linearGradient id="tubeR" x1="0" y1="0" x2="0" y2="1"><stop offset="0" stop-color="#c6c6c6"/><stop offset="0.400" stop-color="#bababa"/><stop offset="0.850" stop-color="#bcbcbc"/><stop offset="1" stop-color="#cdcdcd"/></linearGradient>
<linearGradient id="tubeV" x1="0" y1="0" x2="0" y2="1"><stop offset="0" stop-color="#000" stop-opacity="0.080"/><stop offset="0.450" stop-color="#000" stop-opacity="0"/><stop offset="1" stop-color="#fff" stop-opacity="0.300"/></linearGradient>
<linearGradient id="green" x1="0" y1="0" x2="1" y2="0"><stop offset="0" stop-color="#2c7a30"/><stop offset="0.600" stop-color="#3f9c40"/><stop offset="1" stop-color="#5cb85a"/></linearGradient>
</defs>
<!-- ===== sketch dashed curves under bottom plate ===== -->
<g fill="none" stroke="#a0a0a0" stroke-width="1.300" stroke-dasharray="9 3 2 3">
<ellipse cx="678" cy="521" rx="43" ry="22"/><ellipse cx="678" cy="521" rx="32.500" ry="16.500"/>
<ellipse cx="831" cy="522" rx="43" ry="22"/><ellipse cx="831" cy="522" rx="32.500" ry="16.500"/>
<ellipse cx="844.700" cy="471.600" rx="32.500" ry="16.500"/>
<ellipse cx="971.500" cy="493" rx="43" ry="22"/><ellipse cx="971.500" cy="493" rx="32.500" ry="16.500"/>
<path d="M678.200,537.300 H831 L985,508.300"/>
</g>
<!-- ===== bottom plate ===== -->
<g stroke="#0d0d0d" stroke-width="1" stroke-linejoin="round">
<!-- silhouette (top face + sides) -->
<path d="M671,504.700 L984.900,436.900 L1044.700,446 L1044.700,453 L1022.500,477.500 L989.800,498.800 L980,503 L837.800,531.200 L830.100,531.900 L677,528.200 Q663,527 662.300,521 L661.600,513.100 Q663,507 671,504.700 Z" fill="#3b3e41"/>
<!-- top face -->
<path d="M671,504.700 L984.900,436.900 L1044.700,446 L1022.200,470 L989.100,490.400 L971.500,493.200 L830.800,522 L678.200,520.400 Q663,519 661.800,513.500 Q663,507 671,504.700 Z" fill="#4c4f53"/>
<!-- far band (see-through back wall) -->
<path d="M671,504.700 L984.900,436.900 L984.900,445 L674.600,511.900 Q668,513 662,513.500 Q663,507 671,504.700 Z" fill="#313336" stroke-width="0.800"/>
<path d="M830.800,522 V531.900 M837.800,523 V531.200 M971.500,493.200 V503.500 M989.100,490.400 V498.800 M677,520.400 V528.200" fill="none" stroke-width="0.800"/>
</g>
<!-- ===== bottom belt ===== -->
<g stroke="#0a0a0a" stroke-width="0.900" stroke-linejoin="round">
<!-- outer silhouette incl. wall -->
<path d="M802.700,480.500 L965.900,444.600 C985,441 1004,448 1005.300,460.800 V473.500 C1004,482 994,488.500 984.200,490.400 L843.500,517 C825,521.500 797,517 795.600,504.400 V493.200 C795.600,487 798,483 802.700,480.500 Z" fill="#222"/>
<!-- top rim outer -->
<path d="M802.700,480.500 L965.900,444.600 C985,441 1004,448 1005.300,460.800 C1005,470 996,477 987,479.100 L843.500,504.400 C822,508.500 796,504 795.600,493.200 C795.600,487 798,483 802.700,480.500 Z" fill="#343434"/>
<!-- hole: inner wall -->
<path d="M812.500,481.900 L965.900,447.400 C982,445 997,451 998.200,462.200 C997.500,468 992,472.500 984.200,474.200 L846.300,500.900 C826,504.500 804,502 803.400,493.200 C803.400,488 806,484.500 812.500,481.900 Z" fill="#1d1d1d"/>
<!-- hole floor (plate seen through) -->
<path d="M822,492 L968,459.500 C982,457.500 993,460 997.500,464.500 C996,469 991,472.800 984.200,474.200 L846.300,500.900 C832,503.500 815,503 807,499 C808,496 814,494 822,492 Z" fill="#56595d" stroke="none"/>
<path d="M843.500,504.400 V517 M987,479.100 V490" fill="none" stroke-width="0.700"/>
</g>
<!-- sketch overlay marks on bottom plate -->
<g fill="none" stroke="#c9c9c9" stroke-width="1" stroke-dasharray="16 5 3 5" opacity="0.850"><path d="M678,505.500 H818"/><path d="M858,478 L905,485"/><path d="M893,464 L950,476"/></g>
<g fill="none" stroke="#bdbdbd" stroke-width="0.900" stroke-dasharray="5 4" opacity="0.700"><path d="M700,508 C708,514 710,520 708,527"/><path d="M715,508 C722,514 724,520 721,527"/><path d="M790,514 C786,518 786,524 790,529"/><path d="M802,514 C798,518 798,524 802,529"/><path d="M926,491 C924,496 925,500 928,504"/><path d="M938,489 C936,494 937,498 940,502"/><path d="M872,487 C880,487 888,484 892,480"/><path d="M934,478 C940,474 950,472 958,473"/></g>
<g fill="#c4c4c4"><circle cx="678.200" cy="520.600" r="2.300"/><circle cx="830.600" cy="522.200" r="2.300"/><circle cx="844.600" cy="471.300" r="2"/><circle cx="838" cy="478.500" r="1.800"/><circle cx="818" cy="507" r="1.800"/><circle cx="831" cy="505.500" r="1.800"/><circle cx="971.500" cy="493.300" r="2.300"/><circle cx="985" cy="460" r="2"/><circle cx="959.500" cy="478" r="1.800"/><circle cx="978" cy="477.500" r="1.800"/><circle cx="1014" cy="457" r="2.300" fill="#fff"/></g>
<g fill="#a2a2a2"><circle cx="678.200" cy="537.300" r="1.800"/><circle cx="830" cy="537.800" r="1.800"/><circle cx="843" cy="537" r="1.800"/><circle cx="957.500" cy="508" r="1.600"/><circle cx="984" cy="508.500" r="1.600"/><circle cx="1022.500" cy="470.500" r="1.800"/><circle cx="1045" cy="452" r="1.800"/></g>
<!-- ===== tube ===== -->
<g stroke="#1a1a1a" stroke-width="0.900" stroke-linejoin="round">
<polygon points="984.500,189 1022.500,199 1022.500,459.600 984.500,437.500" fill="url(#tubeL)"/>
<polygon points="1022.500,199 1044.300,181 1044.300,443.500 1022.500,460" fill="url(#tubeR)"/>


</g>
<g fill="url(#holeG)" stroke="#111" stroke-width="1.300">
<g id="hL"><ellipse cx="1003.800" cy="269.800" rx="4.100" ry="3.700" transform="rotate(30 1003.800 269.800)"/></g>
<use href="#hL" y="18.500"/><use href="#hL" y="37"/><use href="#hL" y="55.500"/><use href="#hL" y="74"/><use href="#hL" y="92.600"/><use href="#hL" y="111.200"/><use href="#hL" y="129.800"/><use href="#hL" y="148.400"/><use href="#hL" y="167"/>
<g id="hR"><ellipse cx="1033.400" cy="209" rx="2" ry="4.400" transform="rotate(16 1033.400 209)"/></g>
<use href="#hR" y="18.700"/><use href="#hR" y="37.400"/><use href="#hR" y="56"/><use href="#hR" y="74.700"/><use href="#hR" y="93.400"/><use href="#hR" y="112"/><use href="#hR" y="130.700"/><use href="#hR" y="149.400"/><use href="#hR" y="168"/><use href="#hR" y="186.700"/><use href="#hR" y="205.400"/><use href="#hR" y="224"/>
</g>
<g fill="none" stroke="#666" stroke-width="0.800"><g id="hLs"><path d="M1001.200,268 C1003,270.500 1005,272 1006.800,272.200"/></g><use href="#hLs" y="18.500"/><use href="#hLs" y="37"/><use href="#hLs" y="55.500"/><use href="#hLs" y="74"/><use href="#hLs" y="92.600"/><use href="#hLs" y="111.200"/><use href="#hLs" y="129.800"/><use href="#hLs" y="148.400"/><use href="#hLs" y="167"/></g>
<!-- ===== right belt ===== -->
<g stroke="#0a0a0a" stroke-width="0.900" stroke-linejoin="round">
<path d="M880,238 L989,214 C1000,216 1006.500,222 1007.400,231.300 V246 C1007,254 998,260.500 986,261 L957.600,261.400 L883,247.700 Z" fill="#232323"/>
<path d="M895,236 L985,219 C996,220 1001,226 1000.500,232 C999,240.500 990,246.500 975,247 L956.500,245.500 L898.500,234.500 Z" fill="#353535" stroke-width="0.700"/>
<path d="M941,241 L985,233.500 L993,232 C992,239 985,243.500 972,245 L955,244.400 Z" fill="#fff" stroke-width="0.700"/>
<polygon points="985,233.500 993,232 992,236 985,243.300" fill="#9a9a9a" stroke="none"/>
<path d="M956.500,245.500 V261" fill="none" stroke-width="0.600"/>
</g>
<!-- ===== left belt ===== -->
<g stroke="#0a0a0a" stroke-width="0.900" stroke-linejoin="round">
<path d="M661,245 L846,245.500 C858,247 865.500,254 865.500,262 V270 C865,282 848,290.700 830.500,290.700 H677.400 C658,290.700 643.500,282 643,268.800 V262 C643.500,253 650,247 661,245 Z" fill="#242424"/>
<path d="M661,245 L846,245.500 C858,247 865.500,254 865.500,262 C865,270 850,277 830,277.300 H678 C659,277 643.500,271 643,262 C643.500,253 650,247 661,245 Z" fill="#373737" stroke-width="0.700"/>
<path d="M668,259 L841,260.700 C849,262 853.600,264 853.600,266.700 C853,270.500 843,274 829.200,274.200 L678.800,273.500 C665,273.300 655.500,270.500 655,266.700 C655.500,263 660,260 668,259 Z" fill="#fff" stroke-width="0.700"/>
<path d="M677.400,277.300 V290.700 M830.500,277.300 V290.700" fill="none" stroke-width="0.600" stroke="#000"/>
</g>
<!-- ===== top plate ===== -->
<g stroke="#0b0b0b" stroke-width="1" stroke-linejoin="round">
<!-- silhouette -->
<path d="M667,233.400 L822,176.300 Q828,173.500 836,172.500 L1007,161.500 L1011,162 L1040,170.300 Q1043.500,172 1043.500,176 L1044,183 L989.500,229 L864,256 L841,260.700 L668,259 Q661,252 661.500,243 Q661.500,237 667,233.400 Z" fill="#383b40"/>
<!-- main overlap region: between bottom-face far edge and top-face near edge -->
<path d="M676,242 L826,185.500 Q832,183 839.600,182 L1005.400,171.500 L1038.800,179.200 L1043,176 L989,220 L864,247 L835,250.500 L677,246.500 Z" fill="#484b51"/>
<!-- near side face -->
<path d="M1043.500,176 L1044,183 L989.500,229 L864,256 L864,247 L989,220 Z" fill="#3a3d41" stroke-width="0.800"/>
<!-- region over left belt (darker) -->
<path d="M677,246.500 L835,250.500 L864,247 L864,256 L841,260.700 L668,259 Q662.500,254 662,246 Z" fill="#33363a" stroke-width="0.700"/>
</g>
<!-- belts seen through plate -->
<g fill="#33363a" fill-opacity="0.750" stroke="none"><polygon points="842,216 917.400,235.400 885.800,242.300 842,231"/><polygon points="866,205.500 986,219.500 989,220 952.800,227.800 866,218"/><path d="M807.500,199 A29.500,14 0 0 1 866.500,199 V214 L843,214 V250 L835,250.500 L822,247 C815,246 809,243 807.500,238 Z" fill="#3f4247" fill-opacity="0.600"/></g>
<!-- see-through lines -->
<g fill="none" stroke="#0a0a0a" stroke-width="1.050" stroke-linejoin="round">
<path d="M672,242.500 L826,185.500 Q832,183 839.600,182 L1005.400,171.500 L1038.800,179.200"/>
<path d="M677,242.500 H830 M677,246.300 H835 M677,250 H832"/>
<path d="M822,176.300 V185.800 M836,172.500 V182.200 M1007,161.500 V171.500 M1011,162 L1010,171.800"/>
<!-- spacer cylinder -->
<ellipse cx="837" cy="199" rx="29.500" ry="14"/><path d="M807.500,199 V238 C809,243 815,246 822,247 M866.500,199 V214"/>
<ellipse cx="844.500" cy="191" rx="22" ry="9.500"/><ellipse cx="844.500" cy="200.500" rx="22" ry="9.500"/>
<path d="M822.500,191 V200.500 M866.500,191 V200.500"/>
<!-- spacer block lines -->
<path d="M833,215 V250 M843,213 V252"/>
<!-- belt runs seen through plate -->
<path d="M838,203 L970,218 M842,207.500 L985,224 M843,216 L958,245 M833,219 L940,248 M843,233 L905,247 M866,204 L966,214"/>
<path d="M880,238 L989,214 M895,236 L985,219" stroke-width="0.800"/>
<path d="M829,250 C845,250 858,253 862,258"/>
<!-- tube top inside plate -->
<path d="M984.500,189 L1006.300,171.800 L1038.800,179.200 M984.500,189 L1022.500,199 L1044,181 M984.500,189 V229 M1006.300,171.800 V190"/>
</g>
<!-- bolts -->
<g fill="none" stroke="#0a0a0a" stroke-width="0.950">
<defs><g id="bolt"><ellipse cx="0" cy="0" rx="3.600" ry="1.700"/><ellipse cx="0" cy="9" rx="3.600" ry="1.700"/><path d="M-3.600,0 V9 M3.600,0 V9"/></g></defs>
<use href="#bolt" x="853.500" y="177.500"/><use href="#bolt" x="676" y="240.500"/><use href="#bolt" x="830" y="242"/><use href="#bolt" x="971.500" y="212.500"/><use href="#bolt" x="1003" y="178.500"/><use href="#bolt" x="1025" y="174"/>
<ellipse cx="815" cy="186.500" rx="3.300" ry="1.600"/><ellipse cx="815" cy="195.500" rx="3.300" ry="1.600"/><ellipse cx="834" cy="205" rx="3.300" ry="1.600"/><ellipse cx="834" cy="214.500" rx="3.300" ry="1.600"/><path d="M830.700,205 V214.500 M837.300,205 V214.500"/>
<ellipse cx="1003.500" cy="213" rx="3.500" ry="3.200"/><ellipse cx="1024" cy="200" rx="2.200" ry="3.600" transform="rotate(14 1024 200)"/>
</g>
<!-- green bearing -->
<ellipse cx="844.500" cy="195" rx="21.500" ry="8.300" fill="#3a3f3d" stroke="#111" stroke-width="1.200"/><ellipse cx="844.300" cy="195.600" rx="18.500" ry="5.800" fill="url(#green)" stroke="#0e200e" stroke-width="0.900"/>
<path d="M851,190.300 V201" stroke="#1e5a22" stroke-width="0.800"/>
<path d="M826,197 C832,201.500 850,203 862,198" fill="none" stroke="#111" stroke-width="1"/>
<!--M1-->
<!--P0--><!-- dashed construction -->
<g fill="none" stroke="#8a8a8a" stroke-width="1.200" stroke-dasharray="24 7 3 7">
<ellipse cx="1053" cy="616" rx="162" ry="81"/>
<ellipse cx="1307.200" cy="590.100" rx="43" ry="22" stroke-dasharray="16 5 3 5"/>
<ellipse cx="1328.100" cy="665.600" rx="43" ry="22" stroke-dasharray="16 5 3 5"/>
<ellipse cx="1406.600" cy="730.700" rx="43" ry="22" stroke-dasharray="16 5 3 5"/>
<polygon points="1321.600,556.900 1343.300,538.100 1380.200,548.900 1358.800,567.700" stroke-dasharray="12 4 2 4"/>
</g>
<g fill="#8c8c8c"><circle cx="1053.500" cy="616.500" r="1.800"/><circle cx="1307.200" cy="590.100" r="1.600"/><circle cx="1328.100" cy="665.600" r="1.600"/><circle cx="1406.600" cy="730.700" r="1.600"/><circle cx="1321.600" cy="556.900" r="2"/><circle cx="1343.300" cy="538.100" r="2"/><circle cx="1380.200" cy="548.900" r="2"/><circle cx="1358.800" cy="567.700" r="2"/></g>
<circle cx="1350.500" cy="553.200" r="2.300" fill="#fff" stroke="#888" stroke-width="1"/>
<!-- planes -->
<g fill="#d6e2f0" fill-opacity="0.200" stroke="#8fb0df" stroke-width="1.100" stroke-linejoin="round">
<polygon points="877.100,751.900 1005.700,640.100 1229.700,705.300 1100,816"/>
<polygon points="941.300,583.900 1165.200,649.100 1165.200,872 941.300,807.500"/>
<polygon points="988.600,672 1117.900,560.600 1117.900,785.200 988.600,896.700"/>
</g>
<!-- cube -->
<g stroke="#1a1a1a" stroke-width="1.100" stroke-linejoin="round">
<polygon points="1037.600,699.500 1112.700,721.100 1112.700,794.500 1069.900,832.500 994.800,811.600 994.800,737.200" fill="#8e9092" fill-opacity="0.600"/>
<polygon points="1037.600,699.500 1112.700,721.100 1069.900,757.800 994.800,737.200" fill="#aaacae" fill-opacity="0.300"/>
<polygon points="1069.900,757.800 1112.700,721.100 1112.700,794.500 1069.900,832.500" fill="#77797b" fill-opacity="0.220"/>
<path d="M994.800,737.200 L1069.900,757.800 L1112.700,721.100 M1069.900,757.800 V832.500 M1037.600,699.500 V774.200 L994.800,811.600 M1037.600,774.200 L1112.700,794.500" fill="none" stroke-width="0.900"/>
</g>
<circle cx="1053.100" cy="728.600" r="4" fill="#fff" stroke="#111" stroke-width="1.400"/><circle cx="1053.100" cy="728.600" r="1.600" fill="#111"/>
<!-- plane labels -->
<g fill="#2e62b5">
<text transform="translate(943.500,602.500) skewY(16.200)" font-size="17.500" textLength="41" lengthAdjust="spacingAndGlyphs">Front</text>
<text transform="matrix(0.960,0.280,-0.750,0.650,1001.500,648.500)" font-size="12" font-style="italic" textLength="24" lengthAdjust="spacingAndGlyphs">Top</text>
<text transform="matrix(0.757,-0.653,0,1,990.500,684.500)" font-size="11.500" font-style="italic" textLength="29" lengthAdjust="spacingAndGlyphs">Right</text>
</g>
<!--P1-->
<!--V0--><!-- view cube -->
<g fill="#9c9c9c"><polygon points="1822.700,100.500 1837.700,100.500 1830.100,91"/><polygon points="1822.700,231.300 1837.700,231.300 1830.100,240.700"/><polygon points="1764.400,158.800 1764.400,173 1755.300,165.900"/><polygon points="1895.200,158.800 1895.200,173 1904.700,165.900"/>
<polygon points="1776.300,125 1779,113.500 1789,123.800"/><polygon points="1883.700,125 1881,113.500 1871,123.800"/></g>
<g fill="none" stroke="#9c9c9c" stroke-width="5"><path d="M1809.300,102 C1798,105.500 1789,111.500 1782.500,119.500"/><path d="M1850.700,102 C1862,105.500 1871,111.500 1877.500,119.500"/></g>
<polygon points="1834.500,123.500 1866,135 1870,146 1870,186 1865,193 1838,209.500 1830,209.500 1797,199.500 1792.500,192 1792.500,150 1797,142 1826,125" fill="#e3e8eb"/>
<g fill="#fff"><polygon points="1805.500,142.200 1826.500,128 1854,137.500 1834.500,151.200" stroke="#fff" stroke-width="3" stroke-linejoin="round"/><polygon points="1797.500,160 1831.500,170.200 1831.500,198.500 1797.500,188.500" stroke="#fff" stroke-width="3" stroke-linejoin="round"/><polygon points="1845.500,174.500 1865,157.500 1865,182.500 1845.500,199.500" stroke="#fff" stroke-width="3" stroke-linejoin="round"/><ellipse cx="1839" cy="160.500" rx="5.500" ry="5.200"/><ellipse cx="1797" cy="147.500" rx="3" ry="4.500"/><ellipse cx="1836" cy="204.500" rx="4.500" ry="2.500"/></g>
<path d="M1788,147.800 V197.400" stroke="#3b3bd0" stroke-width="1.200"/><path d="M1788,197.400 L1839.300,212.400" stroke="#e0323c" stroke-width="1.200"/><path d="M1788,197.400 L1809.300,180.800" stroke="#3aa83a" stroke-width="0.900" opacity="0.800"/>
<path d="M1819.500,151 V162" stroke="#fff" stroke-width="1"/>
<text x="1784.800" y="142.300" font-size="12" fill="#4a4ad8" textLength="6.600" lengthAdjust="spacingAndGlyphs">Z</text>
<text x="1844.600" y="218.600" font-size="12.500" fill="#e0465a" textLength="6.600" lengthAdjust="spacingAndGlyphs">X</text>
<text x="1819.600" y="171.300" font-size="12" fill="#a6d3a6" textLength="7" lengthAdjust="spacingAndGlyphs">Y</text>
<g fill="#222"><text transform="translate(1802.800,180.500) skewY(16.500)" font-size="11.500" textLength="24" lengthAdjust="spacingAndGlyphs">Front</text>
<text transform="matrix(0.940,0.340,-0.600,0.800,1820.800,139.300)" font-size="9.500" font-style="italic" textLength="17.500" lengthAdjust="spacingAndGlyphs">Top</text>
<text transform="matrix(0.660,-0.800,0,1,1849.500,184)" font-size="10" font-style="italic" textLength="21" lengthAdjust="spacingAndGlyphs">Right</text></g>
<!-- small cube + caret -->
<g stroke="#333" stroke-width="1" stroke-linejoin="round"><polygon points="1875,222.800 1883.800,226.300 1883.800,236.300 1875,240.500 1866.300,236.300 1866.300,226.300" fill="#fff"/><polygon points="1866.300,226.300 1875,229.800 1875,240.500 1866.300,236.300" fill="#8f8f8f"/><polygon points="1875,229.800 1883.800,226.300 1883.800,236.300 1875,240.500" fill="#e0e0e0"/></g>
<polygon points="1892,229.800 1900,229.800 1896,233.800" fill="#222"/>
<!--V1-->
<!--R0--><!-- left tab widget -->
<path d="M245,538.500 H278 V571.500 H245" fill="#fff" stroke="#b5b5b5" stroke-width="1"/>
<g fill="none" stroke="#333" stroke-width="1.200"><path d="M256.500,547.500 V564 M259,549 H270.500 M259,554 H270.500 M259,559 H270.500 M259,564 H270.500"/><path d="M252.500,547.500 L254.500,549.500 L256.500,547.500" stroke-width="1"/></g>
<!-- right panel group 1 -->
<g fill="#fff" stroke="#adadad" stroke-width="1"><rect x="1888.500" y="400.500" width="40" height="132"/><path d="M1888.500,433.300 H1920 M1888.500,466.200 H1920 M1888.500,499.200 H1920"/>
<rect x="1888.500" y="543.500" width="40" height="165.500"/><path d="M1888.500,576.600 H1920 M1888.500,609.600 H1920 M1888.500,642.700 H1920 M1888.500,675.700 H1920"/></g>
<!-- swatch -->
<g><polygon points="1896.500,420.500 1905,408.200 1910,411 1903,421" fill="#777"/><polygon points="1900,421 1910,410.500 1914,414 1907,422" fill="#9a9a9a"/><polygon points="1903,422 1913.500,414.500 1914.500,420 1908,423" fill="#c4c4c4"/><rect x="1895.500" y="421" width="19" height="6.500" rx="1.500" fill="#fff" stroke="#555" stroke-width="0.800"/><rect x="1896.500" y="422" width="5" height="4.500" fill="#888"/><rect x="1908.500" y="422" width="5.500" height="4.500" fill="#d5d5d5"/></g>
<!-- grid + cube -->
<g id="gridb"><rect x="1895" y="440.800" width="10" height="7.800" fill="#1b5faa"/><path d="M1895,443.400 h10 M1895,446 h10 M1898.300,440.800 v7.800 M1901.700,440.800 v7.800" stroke="#fff" stroke-width="0.700"/></g>
<g fill="#fff" stroke="#222" stroke-width="1" stroke-linejoin="round"><path d="M1905.500,444.500 L1913.800,448 V456 L1906.500,459.800 L1899.200,456 V449"/><path d="M1899.200,448.800 L1906.500,452 L1913.800,448 M1906.500,452 V459.800" fill="none"/></g>
<use href="#gridb"/>
<!-- grid + {cube} -->
<g><rect x="1895" y="474" width="10" height="7.800" fill="#222"/><path d="M1895,476.600 h10 M1895,479.200 h10 M1898.300,474 v7.800 M1901.700,474 v7.800" stroke="#fff" stroke-width="0.700"/>
<g fill="none" stroke="#222" stroke-width="1"><path d="M1899,481 c-1.500,0 -2,0.500 -2,2 v2 c0,1 -0.500,1.500 -1.300,1.700 c0.800,0.200 1.300,0.700 1.300,1.700 v2 c0,1.500 0.500,2 2,2"/><path d="M1911,476.500 c1.500,0 2,0.500 2,2 v4.500 c0,1 0.500,1.500 1.300,1.700 c-0.800,0.200 -1.300,0.700 -1.300,1.700 v4 c0,1.500 -0.500,2 -2,2"/><path d="M1905.500,481 L1910.500,483.300 V488 L1905.500,490.500 L1900.500,488 V483.300 Z M1900.500,483.300 L1905.500,485.600 L1910.500,483.300 M1905.500,485.600 V490.500" stroke-width="0.800" fill="#ddd"/></g></g>
<!-- grid + (x) -->
<g><rect x="1895" y="507" width="10" height="7.800" fill="#222"/><path d="M1895,509.600 h10 M1895,512.200 h10 M1898.300,507 v7.800 M1901.700,507 v7.800" stroke="#fff" stroke-width="0.700"/>
<text x="1894.300" y="525" font-size="17" fill="#222" textLength="4.500" lengthAdjust="spacingAndGlyphs">(</text><text x="1910.300" y="525" font-size="17" fill="#222" textLength="4.500" lengthAdjust="spacingAndGlyphs">)</text><text x="1898.500" y="524.500" font-size="17" font-family="'Liberation Serif',serif" font-style="italic" font-weight="700" fill="#222" textLength="11" lengthAdjust="spacingAndGlyphs">x</text></g>
<!-- butterfly -->
<rect x="1893.500" y="548" width="22.500" height="23.500" rx="3" fill="#dcdcdc"/>
<path d="M1904.800,558.500 C1902,553 1898,550.500 1895.800,551.500 C1896,555.500 1898.500,559 1902,560.500 C1899,561.500 1898.500,564.500 1900,566.500 C1902,567 1904,565 1904.800,562.500 C1905.600,565 1907.600,567 1909.600,566.500 C1911.100,564.500 1910.600,561.500 1907.600,560.500 C1911.100,559 1913.600,555.500 1913.800,551.500 C1911.600,550.500 1907.600,553 1904.800,558.500 Z" fill="#0a0a0a"/>
<!-- MK -->
<rect x="1894" y="582.300" width="21.500" height="21" fill="#1b57d8" stroke="#111" stroke-width="1.200"/>
<text x="1895.800" y="599" font-size="15" font-family="'Liberation Serif',serif" font-weight="700" fill="#fff" textLength="18" lengthAdjust="spacingAndGlyphs">MK</text>
<!-- robot -->
<rect x="1893.500" y="614" width="22.500" height="23.500" rx="3" fill="#dcdcdc"/>
<g transform="translate(1904.800,627.500) scale(0.950)"><path d="M-9.500,-3 L8.500,-5.500 L10,6 L-7.500,9.300 Z" fill="#222"/><circle cx="-3.500" cy="1.500" r="2.900" fill="#fff"/><circle cx="4.200" cy="0.300" r="2.900" fill="#fff"/><circle cx="-2.800" cy="2" r="1.500" fill="#1b57d8"/><circle cx="4.900" cy="0.800" r="1.500" fill="#1b57d8"/><path d="M0.500,6.200 C2.500,6.300 4,5.300 4.800,4" stroke="#fff" stroke-width="0.900" fill="none"/><rect x="-0.700" y="-8.500" width="1.400" height="4.500" fill="#222"/><circle cx="0" cy="-8.800" r="1.200" fill="#222"/><path d="M-4.200,-9.500 v4 M-2.800,-9.500 v4 M2.800,-9.500 v4 M4.200,-9.500 v4" stroke="#4466cc" stroke-width="0.800"/></g>
<!-- green book -->
<rect x="1893.500" y="647.600" width="22.500" height="22.500" rx="2" fill="#4cae4c"/>
<g id="book"><path d="M1896.500,652 C1899.500,651 1902.500,651.500 1904.300,653 V667 C1902.500,665.800 1899.500,665.500 1896.500,666.300 Z M1913,652 C1910,651 1907,651.500 1905.200,653 V667 C1907,665.800 1910,665.500 1913,666.300 Z" fill="#fff"/></g>
<!-- blue book -->
<rect x="1894" y="682" width="21.500" height="21" fill="#1b57d8" stroke="#111" stroke-width="1.200"/>
<use href="#book" y="33.800"/>
<!-- bottom right icons -->
<g fill="none" stroke="#222" stroke-width="1.200" stroke-linejoin="round"><path d="M1822.500,1036.500 H1833 C1836,1036.500 1837.500,1035.500 1837.500,1033.500 V1038 C1837.500,1040.500 1835.500,1041.500 1833,1041.500 H1822.500 Z"/><ellipse cx="1832.300" cy="1033.500" rx="5.200" ry="3.200"/><ellipse cx="1832.300" cy="1033.500" rx="2.300" ry="1.200"/><path d="M1825,1039 v2 M1827.500,1039 v2 M1830,1039 v2 M1832.500,1039 v2 M1835,1038.500 v2" stroke-width="0.800"/></g>
<g fill="none" stroke="#222" stroke-width="1.300" stroke-linejoin="round"><path d="M1855.500,1042.500 C1855.500,1035 1859.500,1030.500 1865,1030.500 C1870.500,1030.500 1874.500,1035 1874.500,1042.500 Z"/><path d="M1859.500,1039.500 C1860,1036 1862,1034.300 1865,1034.300 C1868,1034.300 1870,1036 1870.500,1039.500 L1867.500,1039.500 L1866.500,1038 H1863.500 L1862.500,1039.500 Z" stroke-width="1.100"/></g>
<g fill="#222"><rect x="1893" y="1041" width="14" height="1.800"/><rect x="1899.300" y="1029.500" width="1.500" height="11"/><rect x="1894" y="1029.200" width="12" height="1.300"/><path d="M1893.200,1037 h4.600 l-0.400,1.500 h-3.800 z M1902.200,1037 h4.600 l-0.400,1.500 h-3.800 z"/><path d="M1895.500,1030 l-2,7 M1895.500,1030 l2,7 M1904.500,1030 l-2,7 M1904.500,1030 l2,7" stroke="#222" stroke-width="0.700" fill="none"/></g>
<!--R1-->
</svg>
</div>
</div>
<div id="tabs">
<div class="gl"><svg width="1879" height="29" style="left:0;top:0" viewBox="40 1050 1879 29">
<!-- home tab -->
<path d="M76,1050.500 H109 L116,1064 L109,1077.500 H76 Q74,1077.500 74,1075.500 V1052.500 Q74,1050.500 76,1050.500 Z" fill="#e9e9e9"/>
<path d="M109.500,1050.500 H237 L244.500,1064 L237,1077.500 H109.500 L116.500,1064 Z" fill="#fff"/>
<!-- assembly tab -->
<path d="M249,1050.500 H445 Q447,1050.500 447,1052.500 V1075.500 Q447,1077.500 445,1077.500 H249 Q247,1077.500 247,1075.500 V1052.500 Q247,1050.500 249,1050.500 Z" fill="#ececec"/>
<!-- active tab -->
<path d="M451.500,1050.500 H646.500 Q648.500,1050.500 648.500,1052.500 V1075.500 Q648.500,1077.500 646.500,1077.500 H451.500 Q449.500,1077.500 449.500,1075.500 V1052.500 Q449.500,1050.500 451.500,1050.500 Z" fill="#fff"/>
<path d="M449.700,1075.700 H648.300 Q648.300,1077.500 646.500,1077.500 H451.500 Q449.700,1077.500 449.700,1075.700 Z" fill="#1b5faa"/>
<!-- plus -->
<path d="M56.500,1057.200 V1071.900 M49,1064.500 H64" stroke="#636363" stroke-width="2.800"/>
<!-- home -->
<path d="M83,1063.200 L92.200,1055 L95.500,1057.900 V1055.800 H98.500 V1060.600 L101.400,1063.200 V1063.800 H99 V1071 H94.300 V1065.500 H90.100 V1071 H85.400 V1063.800 H83 Z" fill="#666"/>
<!-- info circle -->
<circle cx="266.700" cy="1063" r="6.900" fill="#5a9ae0"/><circle cx="266.700" cy="1063" r="2.700" fill="#fff"/><rect x="265.600" y="1057" width="2.200" height="2.500" fill="#dfeaf7"/><rect x="265.600" y="1066.500" width="2.200" height="2.500" fill="#dfeaf7"/>
<!-- assembly cube -->
<g stroke="#333" stroke-width="1" stroke-linejoin="round"><path d="M278.800,1057 L281,1054.800 H293 Q295.300,1054.800 295.300,1057 V1071.500 H281 L278.800,1069.300 Z" fill="#fff"/><path d="M278.800,1057 L283.500,1054.800 H290.500 V1061 L286,1063.300 H278.800 Z" fill="#8a8a8a" stroke-width="0.800"/><path d="M283.500,1054.800 V1061 H290.500 M278.800,1063.300 L283.500,1061" fill="none" stroke-width="0.700"/><path d="M281,1063.300 V1071.500" fill="none" stroke-width="0.700"/></g>
<!-- part studio icon -->
<g stroke="#333" stroke-width="1" stroke-linejoin="round" fill="#fff"><path d="M461,1059.500 L463,1058 H467 V1071.500 H463 L461,1070 Z"/><path d="M463,1059.500 V1071.500 M461,1059.500 H463 L464.500,1058" fill="none" stroke-width="0.700"/><path d="M467,1057 L469.500,1054.800 H475.800 Q477.800,1054.800 477.800,1056.800 V1071.500 H470 L467,1069.500 Z"/><path d="M470,1057.300 V1071.500 M467,1057 L470,1057.300 L472,1054.800" fill="none" stroke-width="0.700"/></g>
</svg>
<span class="t" style="left:90.2px;top:5.77px;font-size:14.4px;color:#555;transform:scaleX(0.9313);">Exercise 7 - Ver</span>
<span class="t" style="left:259.9px;top:6.27px;font-size:14.4px;color:#666;transform:scaleX(0.9611);">Exercise 7 Assembly</span>
<span class="t" style="left:442.2px;top:6.27px;font-size:14.4px;color:#222;transform:scaleX(0.9482);">Exercise 7 Part Studio</span>
</div>
</div>
</body>
</html>
